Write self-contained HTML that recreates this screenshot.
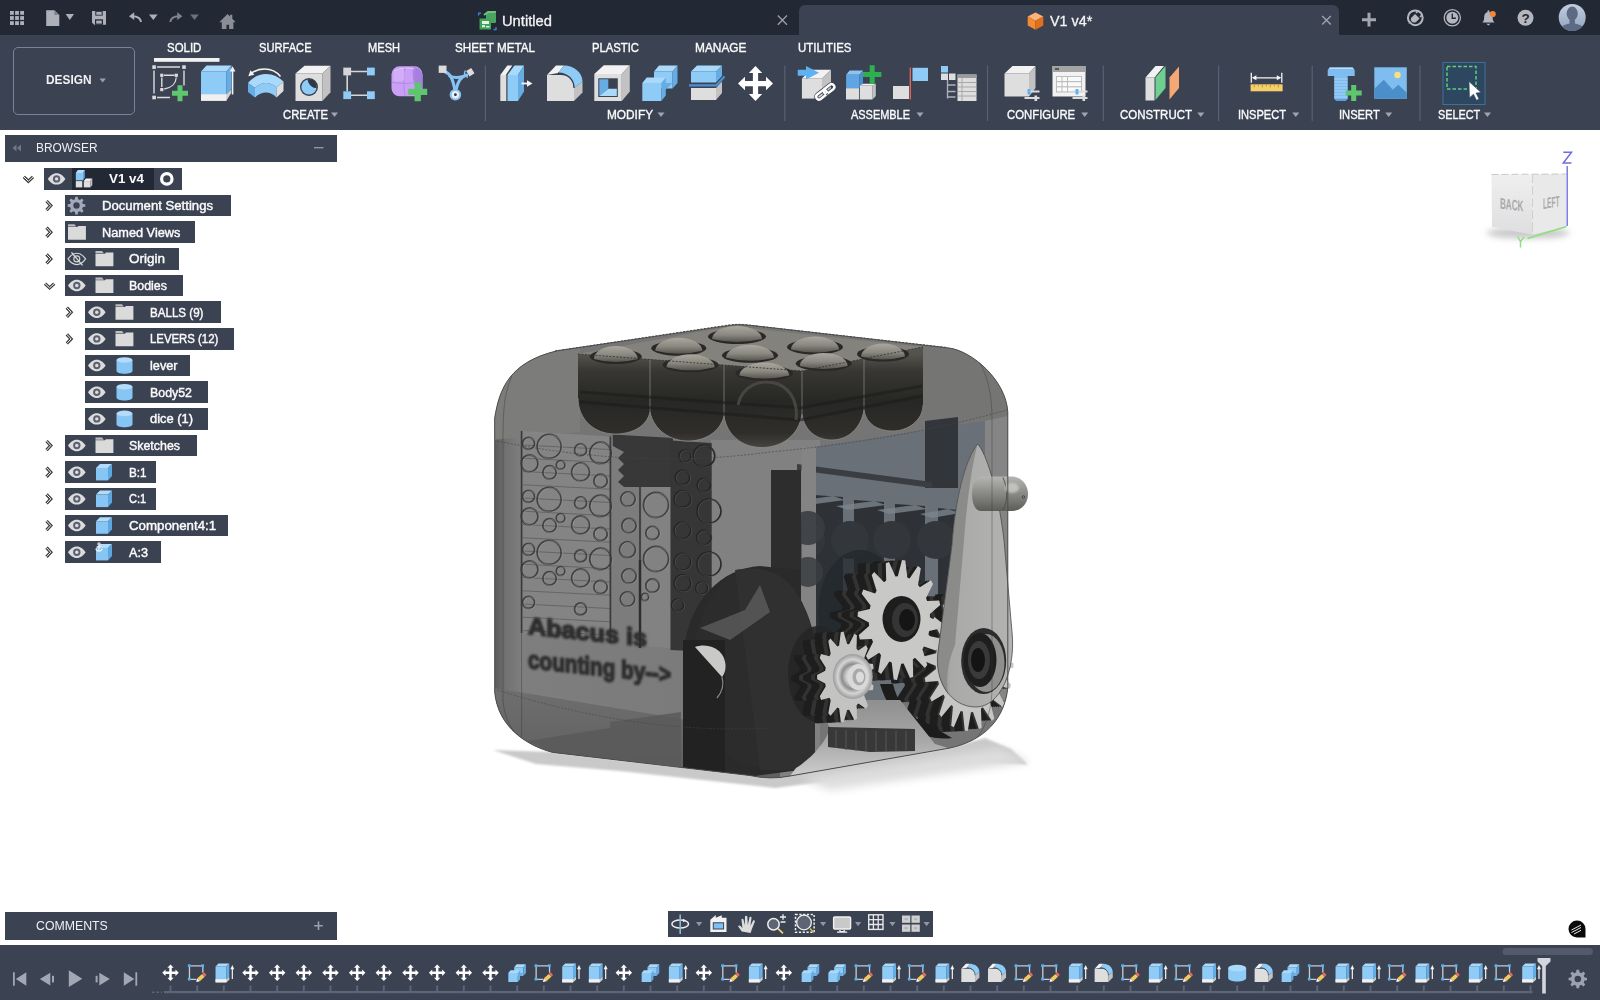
<!DOCTYPE html>
<html><head><meta charset="utf-8"><title>Fusion</title><style>
html,body{margin:0;padding:0;background:#fff;}
body{width:1600px;height:1000px;overflow:hidden;position:relative;font-family:"Liberation Sans",sans-serif;}
.t{position:absolute;white-space:nowrap;display:inline-block;transform-origin:0 50%;}
svg{overflow:visible}
</style></head><body>
<!-- model -->
<svg style="position:absolute;left:440px;top:290px" width="640" height="530" viewBox="440 290 640 530">
<defs>
<filter id="b1" x="-20%" y="-20%" width="140%" height="140%"><feGaussianBlur stdDeviation="1"/></filter>
<filter id="b2" x="-20%" y="-20%" width="140%" height="140%"><feGaussianBlur stdDeviation="2.200"/></filter>
<filter id="b4" x="-20%" y="-40%" width="140%" height="180%"><feGaussianBlur stdDeviation="4"/></filter>
<clipPath id="bodyclip"><path d="M494.7 418C499.3 388.9 509.3 362.3 557 350.8L722 326.5Q738 323 752 325.500L949 348C972 351 1006 380 1007.8 412L1007.8 688C1003.6 726.8 975.1 742.8 949 748.2L790 776Q770 780 750 775.500L552.8 752.4C528 746 498 728 494.7 692Z"/></clipPath>
<linearGradient id="gleft" x1="495" y1="0" x2="720" y2="0" gradientUnits="userSpaceOnUse"><stop offset="0" stop-color="#5c5c5c"/><stop offset=".05" stop-color="#727272"/><stop offset=".12" stop-color="#7e7e7e"/><stop offset="1" stop-color="#7a7a7a"/></linearGradient>
<linearGradient id="gtopdark" x1="0" y1="325" x2="0" y2="445" gradientUnits="userSpaceOnUse"><stop offset="0" stop-color="#3b3a36"/><stop offset=".3" stop-color="#2c2c2a"/><stop offset="1" stop-color="#262625"/></linearGradient>
<linearGradient id="gdome" x1="0" y1="0" x2="0" y2="1"><stop offset="0" stop-color="#a9a79e"/><stop offset=".55" stop-color="#8a8880"/><stop offset="1" stop-color="#55544e"/></linearGradient>
<linearGradient id="garm" x1="0" y1="0" x2="1" y2="0"><stop offset="0" stop-color="#8f8f8d"/><stop offset=".18" stop-color="#a9a9a7"/><stop offset="1" stop-color="#b3b3b1"/></linearGradient>
<linearGradient id="gknob" x1="0" y1="0" x2="0" y2="1"><stop offset="0" stop-color="#b5b5b1"/><stop offset=".45" stop-color="#8d8d89"/><stop offset="1" stop-color="#5c5c59"/></linearGradient>
<radialGradient id="gbear" cx=".5" cy=".5" r=".5"><stop offset="0" stop-color="#efefef"/><stop offset=".35" stop-color="#c9c9c9"/><stop offset=".55" stop-color="#8d8d8d"/><stop offset=".75" stop-color="#d5d5d5"/><stop offset="1" stop-color="#9a9a9a"/></radialGradient>
<linearGradient id="gbot" x1="0" y1="690" x2="0" y2="780" gradientUnits="userSpaceOnUse"><stop offset="0" stop-color="#6e6e6e"/><stop offset="1" stop-color="#5e5e5e"/></linearGradient>
</defs>
<path d="M493 750L536 764L620 771L775 788L900 772L928 765L985 762L1028 764.500L1011 749L985 738L949 748L770 777L552 752Z" fill="#c9c9c9" filter="url(#b1)"/>
<path d="M800 778L1000 748L1030 762L830 790Z" fill="#dddddd" filter="url(#b4)"/>
<g clip-path="url(#bodyclip)">
<rect x="480" y="310" width="540" height="480" fill="#757575"/>
<path d="M495 430L720 445L720 775L495 745Z" fill="url(#gleft)"/>
<path d="M490 440L495 340L580 340L580 432Z" fill="#7c7c7a"/>
<path d="M920 340H1010V425L920 415Z" fill="#757573"/>
<rect x="711" y="440" width="109" height="340" fill="#818181"/>
<path d="M815 447L985 421V700L815 700Z" fill="#697077"/>
<path d="M985 421L1008 416V700H985Z" fill="#858585"/>
<path d="M494 688L700 722L780 712L780 790L494 760Z" fill="url(#gbot)"/>
<path d="M527 741L610 728L610 722L681 712V766L552 752Z" fill="#595959" opacity=".8"/>
<path d="M521.600 431L610.400 436.500V643L521.600 633Z" fill="#848484"/>
<path d="M610.400 436.500L640 438.500V646L610.400 643Z" fill="#7c7c7c"/>
<path d="M641.700 439L670.500 441V648L641.700 646Z" fill="#828282"/>
<path d="M523 445.0L610 449.5M523 458.2L610 462.8M523 471.5L610 476.0M523 484.8L610 489.2M523 498.0L610 502.5M523 511.2L610 515.8M523 524.5L610 529.0M523 537.8L610 542.2M523 551.0L610 555.5M523 564.2L610 568.8M523 577.5L610 582.0M523 590.8L610 595.2M523 604.0L610 608.5M523 617.2L610 621.8M523 630.5L610 635.0" stroke="#565656" stroke-width=".9" fill="none" opacity=".75"/>
<g fill="none" stroke="#3b3b3b" stroke-width="1.800" opacity=".9"><circle cx="549.2" cy="446.4" r="12.0"/><circle cx="528.6" cy="443.4" r="6.0"/><circle cx="580.6" cy="449.9" r="6.0"/><circle cx="600.6" cy="452.9" r="10.8"/><circle cx="529.6" cy="463.4" r="8.4"/><circle cx="560.6" cy="464.9" r="4.3"/><circle cx="549.6" cy="472.4" r="6.7"/><circle cx="580.6" cy="471.9" r="9.0"/><circle cx="600.6" cy="480.9" r="6.7"/><circle cx="549.2" cy="499.4" r="12.0"/><circle cx="528.6" cy="496.4" r="6.0"/><circle cx="580.6" cy="502.9" r="6.0"/><circle cx="600.6" cy="505.9" r="10.8"/><circle cx="529.6" cy="516.4" r="8.4"/><circle cx="560.6" cy="518.0" r="4.3"/><circle cx="549.6" cy="525.4" r="6.7"/><circle cx="580.6" cy="525.0" r="9.0"/><circle cx="600.6" cy="534.0" r="6.7"/><circle cx="549.2" cy="552.4" r="12.0"/><circle cx="528.6" cy="549.4" r="6.0"/><circle cx="580.6" cy="556.0" r="6.0"/><circle cx="600.6" cy="559.0" r="10.8"/><circle cx="529.6" cy="569.4" r="8.4"/><circle cx="560.6" cy="571.0" r="4.3"/><circle cx="549.6" cy="578.4" r="6.7"/><circle cx="580.6" cy="578.0" r="9.0"/><circle cx="600.6" cy="587.0" r="6.7"/><circle cx="528.6" cy="602.4" r="6.0"/><circle cx="580.6" cy="609.0" r="6.0"/><circle cx="628.0" cy="499.0" r="7.2"/><circle cx="629.0" cy="525.6" r="7.2"/><circle cx="627.5" cy="549.7" r="8.0"/><circle cx="629.0" cy="576.0" r="7.2"/><circle cx="627.5" cy="599.0" r="7.2"/><circle cx="656.0" cy="451.0" r="10.8"/><circle cx="656.0" cy="505.0" r="12.5"/><circle cx="652.5" cy="533.0" r="6.7"/><circle cx="656.0" cy="559.0" r="12.5"/><circle cx="652.5" cy="585.7" r="6.7"/><circle cx="645.0" cy="597.0" r="3.6"/></g>
<g fill="none" stroke="#a5a5a5" stroke-width=".8" opacity=".5" transform="translate(1.2,.6)"><circle cx="549.2" cy="446.4" r="12.0"/><circle cx="528.6" cy="443.4" r="6.0"/><circle cx="580.6" cy="449.9" r="6.0"/><circle cx="600.6" cy="452.9" r="10.8"/><circle cx="529.6" cy="463.4" r="8.4"/><circle cx="560.6" cy="464.9" r="4.3"/><circle cx="549.6" cy="472.4" r="6.7"/><circle cx="580.6" cy="471.9" r="9.0"/><circle cx="600.6" cy="480.9" r="6.7"/><circle cx="549.2" cy="499.4" r="12.0"/><circle cx="528.6" cy="496.4" r="6.0"/><circle cx="580.6" cy="502.9" r="6.0"/><circle cx="600.6" cy="505.9" r="10.8"/><circle cx="529.6" cy="516.4" r="8.4"/><circle cx="560.6" cy="518.0" r="4.3"/><circle cx="549.6" cy="525.4" r="6.7"/><circle cx="580.6" cy="525.0" r="9.0"/><circle cx="600.6" cy="534.0" r="6.7"/><circle cx="549.2" cy="552.4" r="12.0"/><circle cx="528.6" cy="549.4" r="6.0"/><circle cx="580.6" cy="556.0" r="6.0"/><circle cx="600.6" cy="559.0" r="10.8"/><circle cx="529.6" cy="569.4" r="8.4"/><circle cx="560.6" cy="571.0" r="4.3"/><circle cx="549.6" cy="578.4" r="6.7"/><circle cx="580.6" cy="578.0" r="9.0"/><circle cx="600.6" cy="587.0" r="6.7"/><circle cx="528.6" cy="602.4" r="6.0"/><circle cx="580.6" cy="609.0" r="6.0"/><circle cx="628.0" cy="499.0" r="7.2"/><circle cx="629.0" cy="525.6" r="7.2"/><circle cx="627.5" cy="549.7" r="8.0"/><circle cx="629.0" cy="576.0" r="7.2"/><circle cx="627.5" cy="599.0" r="7.2"/><circle cx="656.0" cy="451.0" r="10.8"/><circle cx="656.0" cy="505.0" r="12.5"/><circle cx="652.5" cy="533.0" r="6.7"/><circle cx="656.0" cy="559.0" r="12.5"/><circle cx="652.5" cy="585.7" r="6.7"/><circle cx="645.0" cy="597.0" r="3.6"/></g>
<path d="M521.600 431V633M610.400 436.500V643M640 438.500V646" stroke="#3a3a3a" stroke-width="1.700" fill="none"/>
<path d="M612.800 434.500L673 438V487L624 487L618 482L624 476L618 470L624 464L618 458L624 452L612.800 446Z" fill="#383838"/>
<path d="M670.500 440.500L711.700 443V652L670.500 650Z" fill="#363636"/>
<g fill="none" stroke="#242424" stroke-width="1.700" opacity=".95"><circle cx="685.0" cy="456.0" r="6.0"/><circle cx="704.0" cy="456.0" r="10.8"/><circle cx="682.5" cy="477.6" r="7.2"/><circle cx="704.0" cy="485.0" r="6.7"/><circle cx="709.0" cy="511.0" r="12.0"/><circle cx="682.5" cy="499.0" r="8.4"/><circle cx="682.5" cy="530.5" r="8.4"/><circle cx="704.0" cy="537.6" r="7.2"/><circle cx="709.0" cy="564.0" r="12.0"/><circle cx="682.5" cy="561.7" r="8.4"/><circle cx="682.5" cy="583.0" r="8.4"/><circle cx="701.7" cy="588.0" r="6.0"/><circle cx="677.6" cy="605.0" r="6.0"/></g>
<g fill="none" stroke="#6a6a6a" stroke-width=".7" opacity=".6" transform="translate(1,.5)"><circle cx="685.0" cy="456.0" r="6.0"/><circle cx="704.0" cy="456.0" r="10.8"/><circle cx="682.5" cy="477.6" r="7.2"/><circle cx="704.0" cy="485.0" r="6.7"/><circle cx="709.0" cy="511.0" r="12.0"/><circle cx="682.5" cy="499.0" r="8.4"/><circle cx="682.5" cy="530.5" r="8.4"/><circle cx="704.0" cy="537.6" r="7.2"/><circle cx="709.0" cy="564.0" r="12.0"/><circle cx="682.5" cy="561.7" r="8.4"/><circle cx="682.5" cy="583.0" r="8.4"/><circle cx="701.7" cy="588.0" r="6.0"/><circle cx="677.6" cy="605.0" r="6.0"/></g>
<path d="M640 560V648" stroke="#2e2e2e" stroke-width="2.400"/>
<g filter="url(#b1)" fill="#2f2f2f" stroke="#2f2f2f" stroke-width="1.600" font-family="Liberation Sans, sans-serif" font-weight="bold"><text transform="translate(528,634) skewY(6)" font-size="24" textLength="119" lengthAdjust="spacingAndGlyphs">Abacus is</text><text transform="translate(528,668) skewY(6)" font-size="25" textLength="143" lengthAdjust="spacingAndGlyphs">counting by--&gt;</text></g>
<path d="M925 421L958 417V488L925 488Z" fill="#32363b"/>
<path d="M797 464L932 482V488L797 470Z" fill="#3a3e43"/>
<path d="M814 495L843 497V640H814Z" fill="#2e3237"/>
<path d="M796 501L833 496L845 500L808 505Z" fill="#7c848c" opacity=".8"/>
<path d="M854 500L884 502V640H854Z" fill="#2e3237"/>
<path d="M836 506L874 501L886 505L848 510Z" fill="#7c848c" opacity=".8"/>
<path d="M895 504L925 506V640H895Z" fill="#2e3237"/>
<path d="M877 510L915 505L927 509L889 514Z" fill="#7c848c" opacity=".8"/>
<path d="M938 508L958 510V640H938Z" fill="#2e3237"/>
<path d="M920 514L948 509L960 513L932 518Z" fill="#7c848c" opacity=".8"/>
<circle cx="806" cy="540" r="19" fill="#33373c"/>
<circle cx="850" cy="540" r="19" fill="#33373c"/>
<circle cx="892" cy="540" r="19" fill="#33373c"/>
<circle cx="936" cy="540" r="19" fill="#33373c"/>
<path d="M801.500 447L816 447V640H801.500Z" fill="#848484"/>
<circle cx="808" cy="528" r="17" fill="#3a3d41" clip-path="url(#bodyclip)" opacity=".9"/><circle cx="808" cy="572" r="15" fill="#3a3d41" opacity=".85"/>
<path d="M771 470L801 470V720H771Z" fill="#2d2d2d"/>
<path d="M684 648C690 600 722 568 760 566L800 570V770L740 778C700 770 684 720 684 648Z" fill="#2a2a2a"/>
<ellipse cx="755" cy="667" rx="62" ry="99" fill="#2c2c2c"/>
<path d="M735 570C790 560 815 600 815 680V770H760Z" fill="#303030"/>
<path d="M700 628L745 610L760 585L770 612L730 640Z" fill="#5c5c5c" opacity=".8"/>
<path d="M683 640H725V775L683 768Z" fill="#222"/>
<path d="M695 647C705 643 718 647 723 656C727 664 726 672 722 677Z" fill="#c9c9c7"/>
<path d="M722 677C724 684 722 692 717 698" stroke="#8a8a88" stroke-width="1.200" fill="none"/>
<ellipse cx="702" cy="670" rx="14" ry="26" fill="#1e1e1e" opacity=".0"/>
</g>
<path d="M578 354L731 326L923 347L802 371Z" fill="#84827c"/>
<linearGradient id="glob" x1="0" y1="354" x2="0" y2="447" gradientUnits="userSpaceOnUse"><stop offset="0" stop-color="#54534d"/><stop offset=".18" stop-color="#383733"/><stop offset=".5" stop-color="#272725"/><stop offset=".85" stop-color="#2f2e2b"/><stop offset="1" stop-color="#45443f"/></linearGradient>
<path d="M578 354L802 371L923 347V405C923 420 908 431 893 431C878 431 866 424 864 410C861 428 848 440 832 440C816 440 804 430 802 414C799 436 781 447.500 762 447.500C743 447.500 727 436 724 416C720 432 705 441 688 441C670 441 654 430 650 412C647 426 633 434 615 434C595 434 578 420 578 398Z" fill="url(#glob)"/>
<path d="M650 360V412M724 365V416M802 371V414M864 359V410" stroke="#8c8a84" stroke-width="1" opacity=".7"/>
<path d="M578 398C578 420 595 434 615 434C633 434 647 426 650 412C654 430 670 441 688 441C705 441 720 432 724 416C727 436 743 447.500 762 447.500C781 447.500 799 436 802 414C804 430 816 440 832 440C848 440 861 428 864 410C866 424 878 431 893 431C908 431 923 420 923 405" stroke="#8f8d87" stroke-width="1" fill="none" opacity=".75"/>
<path d="M580 392L800 408L922 386M580 402L800 420L922 396" stroke="#1b1b1a" stroke-width="3" fill="none" opacity=".55"/>
<path d="M738 405C742 386 760 378 778 384C792 390 798 404 796 420" stroke="#4d4c47" stroke-width="3" fill="none" opacity=".8"/>
<ellipse cx="737.0" cy="336.5" rx="29.0" ry="7.500" fill="#2a2927"/>
<ellipse cx="678.8" cy="348.2" rx="27.5" ry="7.500" fill="#2a2927"/>
<ellipse cx="815.0" cy="347.0" rx="28.0" ry="7.500" fill="#2a2927"/>
<ellipse cx="615.8" cy="356.5" rx="26.0" ry="7.500" fill="#2a2927"/>
<ellipse cx="750.0" cy="355.3" rx="28.0" ry="7.500" fill="#2a2927"/>
<ellipse cx="883.0" cy="354.1" rx="26.0" ry="7.500" fill="#2a2927"/>
<ellipse cx="690.6" cy="364.8" rx="28.0" ry="7.500" fill="#2a2927"/>
<ellipse cx="823.7" cy="363.5" rx="28.0" ry="7.500" fill="#2a2927"/>
<ellipse cx="764.3" cy="373.1" rx="29.0" ry="7.500" fill="#2a2927"/>
<path d="M712.0 339.0A25.0 13 0 0 1 762.0 339.0Q737.0 345.0 712.0 339.0Z" fill="url(#gdome)"/>
<path d="M655.3 350.7A23.5 13 0 0 1 702.3 350.7Q678.8 356.7 655.3 350.7Z" fill="url(#gdome)"/>
<path d="M791.0 349.5A24.0 13 0 0 1 839.0 349.5Q815.0 355.5 791.0 349.5Z" fill="url(#gdome)"/>
<path d="M593.8 359.0A22.0 13 0 0 1 637.8 359.0Q615.8 365.0 593.8 359.0Z" fill="url(#gdome)"/>
<path d="M726.0 357.8A24.0 13 0 0 1 774.0 357.8Q750.0 363.8 726.0 357.8Z" fill="url(#gdome)"/>
<path d="M861.0 356.6A22.0 13 0 0 1 905.0 356.6Q883.0 362.6 861.0 356.6Z" fill="url(#gdome)"/>
<path d="M666.6 367.3A24.0 13 0 0 1 714.6 367.3Q690.6 373.3 666.6 367.3Z" fill="url(#gdome)"/>
<path d="M799.7 366.0A24.0 13 0 0 1 847.7 366.0Q823.7 372.0 799.7 366.0Z" fill="url(#gdome)"/>
<path d="M739.3 375.6A25.0 13 0 0 1 789.3 375.6Q764.3 381.6 739.3 375.6Z" fill="url(#gdome)"/>
<path d="M555 351L722 326Q738 323 752 325.500L947 347.500" stroke="#3a3a3a" stroke-width="1" fill="none" stroke-dasharray="2 1.500"/>
<path d="M578 354L802 371L923 347" stroke="#2e2e2c" stroke-width="1" fill="none" stroke-dasharray="2 1.500" opacity=".8"/>
<ellipse cx="860" cy="612" rx="42" ry="62" fill="#23282c" opacity=".75"/>
<ellipse cx="818" cy="674" rx="30" ry="48" fill="#262626" opacity=".9"/>
<defs><path id="gr3" d="M1013.5 663.3 L1013.4 667.6 L1000.8 670.8 L1000.4 673.9 L1011.0 684.5 L1010.0 688.6 L997.5 685.7 L996.5 688.4 L1004.4 703.6 L1002.6 707.0 L991.3 698.3 L989.8 700.4 L994.3 718.6 L991.9 720.9 L982.9 707.3 L981.0 708.6 L981.6 728.0 L978.9 729.1 L973.0 711.9 L971.0 712.2 L967.7 731.0 L964.8 730.8 L962.8 711.6 L960.7 710.9 L953.8 727.2 L951.2 725.7 L953.0 706.4 L951.3 704.9 L941.4 717.1 L939.2 714.3 L944.8 696.9 L943.5 694.6 L931.6 701.5 L930.1 697.9 L939.0 684.0 L938.1 681.1 L925.5 682.1 L924.7 677.9 L936.0 669.0 L935.7 665.8 L923.5 660.7 L923.6 656.4 L936.2 653.2 L936.6 650.1 L926.0 639.5 L927.0 635.4 L939.5 638.3 L940.5 635.6 L932.6 620.4 L934.4 617.0 L945.7 625.7 L947.2 623.6 L942.7 605.4 L945.1 603.1 L954.1 616.7 L956.0 615.4 L955.4 596.0 L958.1 594.9 L964.0 612.1 L966.0 611.8 L969.3 593.0 L972.2 593.2 L974.2 612.4 L976.3 613.1 L983.2 596.8 L985.8 598.3 L984.0 617.6 L985.7 619.1 L995.6 606.9 L997.8 609.7 L992.2 627.1 L993.5 629.4 L1005.4 622.5 L1006.9 626.1 L998.0 640.0 L998.9 642.9 L1011.5 641.9 L1012.3 646.1 L1001.0 655.0 L1001.3 658.2z"/></defs><use href="#gr3" x="-34.0" y="1.4" fill="#1e1e1e"/><use href="#gr3" x="-32.0" y="1.3" fill="#1e1e1e"/><use href="#gr3" x="-30.0" y="1.2" fill="#1e1e1e"/><use href="#gr3" x="-28.0" y="1.1" fill="#1e1e1e"/><use href="#gr3" x="-26.0" y="1.0" fill="#333332"/><use href="#gr3" x="-24.0" y="1.0" fill="#333332"/><use href="#gr3" x="-22.0" y="0.9" fill="#1e1e1e"/><use href="#gr3" x="-20.0" y="0.8" fill="#1e1e1e"/><use href="#gr3" x="-18.0" y="0.7" fill="#1e1e1e"/><use href="#gr3" x="-16.0" y="0.6" fill="#1e1e1e"/><use href="#gr3" x="-14.0" y="0.6" fill="#333332"/><use href="#gr3" x="-12.0" y="0.5" fill="#333332"/><use href="#gr3" x="-10.0" y="0.4" fill="#1e1e1e"/><use href="#gr3" x="-8.0" y="0.3" fill="#1e1e1e"/><use href="#gr3" x="-6.0" y="0.2" fill="#1e1e1e"/><use href="#gr3" x="-4.0" y="0.2" fill="#1e1e1e"/><use href="#gr3" x="-2.0" y="0.1" fill="#333332"/><use href="#gr3" fill="#c6c6c4"/>
<path d="M880 684C892 725 925 742 952 738L925 722C905 715 897 700 893 684Z" fill="#1c1c1c"/>
<linearGradient id="gfloor" x1="0" y1="700" x2="0" y2="778" gradientUnits="userSpaceOnUse"><stop offset="0" stop-color="#8f8f8f"/><stop offset=".5" stop-color="#a6a6a6"/><stop offset="1" stop-color="#cfcfcf"/></linearGradient>
<path d="M815 700H900L935 744L949 748.200L790 776L796 768C812 758 826 742 830 728Z" fill="url(#gfloor)" clip-path="url(#bodyclip)"/>
<path d="M828 727L915 729V751L870 752L828 747Z" fill="#383838"/>
<path d="M836 730V748M846 730V750M856 731V751M866 731V751M876 731V751M886 731V751M896 731V751M906 731V750" stroke="#555" stroke-width="1.500" opacity=".7"/>
<defs><path id="gr1" d="M941.4 623.6 L941.1 628.3 L929.2 631.1 L928.4 634.4 L937.3 646.3 L935.7 650.4 L923.9 646.5 L922.4 649.2 L927.3 664.9 L924.8 667.9 L915.0 657.8 L912.8 659.4 L913.2 676.7 L910.0 678.1 L903.6 663.4 L901.2 663.7 L897.0 679.9 L893.7 679.4 L891.7 662.4 L889.4 661.4 L881.1 673.9 L878.2 671.7 L881.0 654.9 L879.1 652.7 L868.1 659.8 L866.0 656.1 L873.0 642.1 L871.9 639.0 L859.8 639.6 L858.8 635.0 L869.1 625.9 L868.9 622.5 L857.6 616.4 L857.9 611.7 L869.8 608.9 L870.6 605.6 L861.7 593.7 L863.3 589.6 L875.1 593.5 L876.6 590.8 L871.7 575.1 L874.2 572.1 L884.0 582.2 L886.2 580.6 L885.8 563.3 L889.0 561.9 L895.4 576.6 L897.8 576.3 L902.0 560.1 L905.3 560.6 L907.3 577.6 L909.6 578.6 L917.9 566.1 L920.8 568.3 L918.0 585.1 L919.9 587.3 L930.9 580.2 L933.0 583.9 L926.0 597.9 L927.1 601.0 L939.2 600.4 L940.2 605.0 L929.9 614.1 L930.1 617.5z"/></defs><use href="#gr1" x="-28.0" y="1.1" fill="#1e1e1e"/><use href="#gr1" x="-26.0" y="1.0" fill="#1e1e1e"/><use href="#gr1" x="-24.0" y="1.0" fill="#1e1e1e"/><use href="#gr1" x="-22.0" y="0.9" fill="#1e1e1e"/><use href="#gr1" x="-20.0" y="0.8" fill="#333332"/><use href="#gr1" x="-18.0" y="0.7" fill="#333332"/><use href="#gr1" x="-16.0" y="0.6" fill="#1e1e1e"/><use href="#gr1" x="-14.0" y="0.6" fill="#1e1e1e"/><use href="#gr1" x="-12.0" y="0.5" fill="#1e1e1e"/><use href="#gr1" x="-10.0" y="0.4" fill="#1e1e1e"/><use href="#gr1" x="-8.0" y="0.3" fill="#333332"/><use href="#gr1" x="-6.0" y="0.2" fill="#333332"/><use href="#gr1" x="-4.0" y="0.2" fill="#1e1e1e"/><use href="#gr1" x="-2.0" y="0.1" fill="#1e1e1e"/><use href="#gr1" fill="#c8c8c6"/>
<ellipse cx="901.500" cy="619" rx="19" ry="23" fill="#1d1d1d"/><ellipse cx="905" cy="620" rx="13" ry="17" fill="#353535"/><ellipse cx="907" cy="620" rx="8" ry="11" fill="#151515"/>
<defs><path id="gr2" d="M873.6 685.7 L872.9 689.9 L864.5 690.9 L863.6 693.8 L867.9 705.4 L866.0 708.7 L858.3 703.4 L856.6 705.2 L857.0 718.7 L854.5 720.2 L849.1 709.7 L847.1 710.1 L843.6 722.4 L840.8 721.9 L839.2 708.6 L837.3 707.5 L830.6 715.7 L828.3 713.2 L830.7 700.2 L829.4 697.8 L821.1 700.1 L819.8 696.2 L825.7 686.6 L825.2 683.4 L817.1 679.3 L817.1 674.9 L825.2 670.7 L825.7 667.6 L819.7 657.9 L821.0 654.0 L829.4 656.2 L830.7 653.8 L828.3 640.9 L830.5 638.4 L837.3 646.6 L839.1 645.4 L840.8 632.2 L843.5 631.6 L847.1 643.9 L849.1 644.2 L854.4 633.7 L856.9 635.3 L856.5 648.8 L858.2 650.6 L866.0 645.2 L867.8 648.4 L863.5 660.1 L864.5 663.0 L872.9 663.9 L873.6 668.2 L866.4 675.3 L866.4 678.5z"/></defs><use href="#gr2" x="-26.0" y="1.0" fill="#1e1e1e"/><use href="#gr2" x="-24.0" y="1.0" fill="#1e1e1e"/><use href="#gr2" x="-22.0" y="0.9" fill="#1e1e1e"/><use href="#gr2" x="-20.0" y="0.8" fill="#1e1e1e"/><use href="#gr2" x="-18.0" y="0.7" fill="#333332"/><use href="#gr2" x="-16.0" y="0.6" fill="#333332"/><use href="#gr2" x="-14.0" y="0.6" fill="#1e1e1e"/><use href="#gr2" x="-12.0" y="0.5" fill="#1e1e1e"/><use href="#gr2" x="-10.0" y="0.4" fill="#1e1e1e"/><use href="#gr2" x="-8.0" y="0.3" fill="#1e1e1e"/><use href="#gr2" x="-6.0" y="0.2" fill="#333332"/><use href="#gr2" x="-4.0" y="0.2" fill="#333332"/><use href="#gr2" x="-2.0" y="0.1" fill="#1e1e1e"/><use href="#gr2" fill="#c3c3c1"/>
<ellipse cx="852.800" cy="676.500" rx="20" ry="22.500" fill="url(#gbear)"/><ellipse cx="858" cy="677" rx="10.500" ry="13" fill="#d9d9d9"/><ellipse cx="859" cy="677" rx="6.500" ry="8.500" fill="#a9a9a9"/><ellipse cx="860" cy="677" rx="4" ry="5.500" fill="#dcdcdc"/>
<path d="M977.500 444C986 452 998 490 1004 540L1012 632C1016 670 1000 707 976 707C950 707 934 680 938 652L952 545C955 500 965 460 977.500 444Z" fill="url(#garm)"/>
<path d="M977.500 444C965 460 955 500 952 545L938 652C936 668 940 684 948 694C946 680 947 664 955 645L964 540C967 500 972 465 977.500 444Z" fill="#8b8b89"/>
<path d="M977.500 444C986 452 998 490 1004 540L1012 632C1016 670 1000 707 976 707C950 707 934 680 938 652L952 545C955 500 965 460 977.500 444Z" fill="none" stroke="#4a4a4a" stroke-width=".8"/>
<ellipse cx="983.700" cy="661" rx="22.500" ry="33" fill="#2b2b2b"/><ellipse cx="986" cy="663" rx="18.500" ry="29" fill="#8f8f8d"/><ellipse cx="980" cy="660" rx="16.500" ry="27" fill="#1e1e1e"/><ellipse cx="979" cy="660" rx="11" ry="19" fill="#3a3a3a"/><ellipse cx="978" cy="660" rx="7" ry="12" fill="#141414"/>
<path d="M981 476.500H1011C1022 476.500 1028 485 1028 494C1028 503 1022 511 1011 511H981C975 511 972 503 972 494C972 485 975 476.500 981 476.500Z" fill="url(#gknob)"/>
<path d="M1003 477.500C1008 490 1008 500 1003 510" stroke="#4c4c4a" stroke-width=".9" fill="none"/>
<ellipse cx="1012" cy="488" rx="7" ry="5" fill="#d2d2ce" opacity=".7" filter="url(#b1)"/>
<circle cx="1023.500" cy="497" r="1.300" fill="none" stroke="#333" stroke-width=".7"/>
<path d="M494.7 418C499.3 388.9 509.3 362.3 557 350.8L722 326.5Q738 323 752 325.500L949 348C972 351 1006 380 1007.8 412L1007.8 688C1003.6 726.8 975.1 742.8 949 748.2L790 776Q770 780 750 775.500L552.8 752.4C528 746 498 728 494.7 692Z" fill="none" stroke="#4d4d4d" stroke-width="1"/>
<path d="M497 441Q640 470 770 452Q900 440 1007 410" stroke="#444" stroke-width=".8" fill="none" stroke-dasharray="2 1.500" opacity=".8"/>
<path d="M497 690Q640 735 770 728" stroke="#444" stroke-width=".8" fill="none" stroke-dasharray="2 1.500" opacity=".7"/>
<path d="M521.600 633V745M512 376C505 392 503 405 503 440V700C504 718 512 734 526 742" stroke="#3a3a3a" stroke-width=".8" fill="none" opacity=".55" clip-path="url(#bodyclip)"/>
<path d="M975 356C988 372 992 395 992 420V690C991 715 984 730 975 740" stroke="#3a3a3a" stroke-width=".8" fill="none" opacity=".5" clip-path="url(#bodyclip)"/>
</svg>
<!-- titlebar -->
<div style="position:absolute;left:0;top:0;width:1600px;height:35px;background:#222834"></div>
<div style="position:absolute;left:799px;top:5px;width:540px;height:31px;background:#3b4252;border-radius:6px 6px 0 0"></div>
<span class="t" style="left:502.30px;top:12.95px;font-size:14px;line-height:17px;color:#f2f3f5; transform:scaleX(1.0505);-webkit-text-stroke:.3px #f2f3f5;">Untitled</span>
<span class="t" style="left:1050.30px;top:13.05px;font-size:14px;line-height:17px;color:#f2f3f5; transform:scaleX(1.0255);-webkit-text-stroke:.3px #f2f3f5;">V1 v4*</span>
<svg style="position:absolute;left:0;top:0" width="1600" height="36" viewBox="0 0 1600 36">
<rect x="10.0" y="11.0" width="3.8" height="3.8" fill="#adb0b9"/>
<rect x="15.1" y="11.0" width="3.8" height="3.8" fill="#adb0b9"/>
<rect x="20.2" y="11.0" width="3.8" height="3.8" fill="#adb0b9"/>
<rect x="10.0" y="16.1" width="3.8" height="3.8" fill="#adb0b9"/>
<rect x="15.1" y="16.1" width="3.8" height="3.8" fill="#adb0b9"/>
<rect x="20.2" y="16.1" width="3.8" height="3.8" fill="#adb0b9"/>
<rect x="10.0" y="21.2" width="3.8" height="3.8" fill="#adb0b9"/>
<rect x="15.1" y="21.2" width="3.8" height="3.8" fill="#adb0b9"/>
<rect x="20.2" y="21.2" width="3.8" height="3.8" fill="#adb0b9"/>
<path d="M46.2 10.2h8.2l4.9 4.9v10.8h-13.1z" fill="#adb0b9"/><path d="M54.4 10.2v4.9h4.9z" fill="#7d818c"/>
<path d="M65.6 14h8.4l-4.2 6z" fill="#adb0b9"/>
<path d="M92 11h14v13.8h-11.8l-2.2-2.2z" fill="#adb0b9"/><rect x="95.3" y="11" width="7.4" height="4.6" fill="#222834"/><rect x="96.3" y="11.8" width="5.4" height="3" fill="#adb0b9"/><rect x="95" y="19.3" width="8" height="5.5" fill="#222834"/><rect x="96.2" y="20.6" width="5.6" height="3" fill="#adb0b9"/>
<path d="M141 22c-.5-4-3.5-5.8-8.5-5.8" fill="none" stroke="#adb0b9" stroke-width="2"/><path d="M129 16.2l5.2-3.9v7.8z" fill="#adb0b9"/>
<path d="M149 14.4h8.6l-4.3 5.6z" fill="#adb0b9"/>
<path d="M170.3 22c.5-4 3.5-5.8 8.5-5.8" fill="none" stroke="#80848f" stroke-width="2"/><path d="M182.4 16.2l-5.2-3.9v7.8z" fill="#80848f"/>
<path d="M190.2 14.4h8.6l-4.3 5.6z" fill="#6d717c"/>
<path d="M219.3 22.2l8.2-8.2 2.6 2.6v-1.8h2.2v4l3.4 3.4h-2.3v6.8h-4.3v-4.2h-2.6v4.2h-4.7v-6.8z" fill="#8a8d95"/>
<rect x="486" y="13" width="10" height="10" rx="1" fill="#4aa562"/><path d="M484 15l4-3h8" fill="none" stroke="#6cc381" stroke-width="2"/><rect x="479.5" y="18.5" width="11.5" height="11" fill="#3ea457"/><rect x="482" y="21" width="7" height="3" fill="#e8f5ea"/><rect x="482" y="25.2" width="3" height="2" fill="#e8f5ea"/><rect x="486" y="26" width="3.5" height="1.4" fill="#e8f5ea"/>
<path d="M478.6 15.5v-2.4h2.4M496 27v2.6h-2.6" fill="none" stroke="#3f86e0" stroke-width="1.3"/>
<path d="M777.8 15.6l9.2 9.2M787 15.6l-9.2 9.2" stroke="#9a9da6" stroke-width="1.4"/>
<path d="M1035.5 12.4l7.8 4.1-7.8 4.2-7.8-4.2z" fill="#ffb27a"/><path d="M1027.7 16.5l7.8 4.2v9l-7.8-4.3z" fill="#f58a33"/><path d="M1043.3 16.5l-7.8 4.2v9l7.8-4.3z" fill="#e26f1c"/>
<path d="M1322.2 16l8.6 8.6M1330.8 16l-8.6 8.6" stroke="#9ea2ac" stroke-width="1.4"/>
<path d="M1369 12.8v13.8M1362 19.7h14" stroke="#a3a6ae" stroke-width="3"/>
<circle cx="1415.3" cy="17.8" r="7.4" fill="none" stroke="#b4b7bf" stroke-width="2"/><path d="M1411.5 17.5l3.5-3.5 4.6 4.6-3.5 3.5c-1.6 1-3.4 .4-4.3-.6-1-.9-1.4-2.6-.3-4z" fill="#b4b7bf"/><path d="M1416 13l2-2M1420 17l2-2M1411 22l-2.5 2.5" stroke="#b4b7bf" stroke-width="1.6"/><path d="M1408 24l3 2.5" stroke="#222834" stroke-width="2.5"/>
<circle cx="1452.3" cy="17.8" r="8.1" fill="none" stroke="#b4b7bf" stroke-width="1.3"/><circle cx="1452.3" cy="17.8" r="6" fill="#b4b7bf"/><path d="M1452.3 13.6v4.6h3.6" fill="none" stroke="#222834" stroke-width="1.4"/>
<path d="M1482.3 22.6c1.8-1.6 1.8-3.4 1.9-6 .2-3 2-4.6 4.2-4.6s4 1.600 4.200 4.600c.1 2.600 .1 4.400 1.900 6z" fill="#b4b7bf"/><rect x="1487.400" y="10.3" width="2" height="2.200" rx="1" fill="#b4b7bf"/><path d="M1486.200 23.800h4.400l-2.200 1.700z" fill="#b4b7bf"/><circle cx="1492.700" cy="14" r="3.1" fill="#f5853a"/>
<circle cx="1525.5" cy="17.8" r="8" fill="#b4b7bf"/><text x="1525.5" y="22.6" font-family="Liberation Sans, sans-serif" font-weight="bold" font-size="13.5" text-anchor="middle" fill="#222834">?</text>
<defs><clipPath id="avc"><circle cx="1572.2" cy="17.4" r="13.5"/></clipPath><linearGradient id="avg" x1="0" y1="0" x2="0" y2="1"><stop offset="0" stop-color="#c3cfe0"/><stop offset="1" stop-color="#8fa2bd"/></linearGradient></defs>
<circle cx="1572.2" cy="17.4" r="13.5" fill="url(#avg)"/><g clip-path="url(#avc)" fill="#5d6a84"><ellipse cx="1572.2" cy="13.6" rx="5.6" ry="7"/><path d="M1569.500 19h5.400v4.500c4 1 7.600 2 8.600 4.500v6h-22.600v-6c1-2.500 4.600-3.500 8.600-4.500z"/></g>
</svg>
<!-- toolbar -->
<div style="position:absolute;left:0;top:35px;width:1600px;height:95px;background:#3b4252"></div>
<div style="position:absolute;left:13px;top:47.300px;width:120px;height:65.500px;border:1.200px solid #78829a;border-radius:5px"></div>
<span class="t" style="left:45.70px;top:72.73px;font-size:12.6px;line-height:15px;color:#f2f3f5;font-weight:bold; transform:scaleX(0.9426);">DESIGN</span>
<svg style="position:absolute;left:98px;top:76px" width="10" height="8"><path d="M1.500 2.500h6.400l-3.200 4z" fill="#9aa0ae"/></svg>
<span class="t" style="left:167.00px;top:40.84px;font-size:12px;line-height:14px;color:#fafbfc; transform:scaleX(0.9528);-webkit-text-stroke:.35px #fafbfc;">SOLID</span>
<span class="t" style="left:259.00px;top:40.84px;font-size:12px;line-height:14px;color:#fafbfc; transform:scaleX(0.9272);-webkit-text-stroke:.35px #fafbfc;">SURFACE</span>
<span class="t" style="left:368.00px;top:40.84px;font-size:12px;line-height:14px;color:#fafbfc; transform:scaleX(0.9242);-webkit-text-stroke:.35px #fafbfc;">MESH</span>
<span class="t" style="left:454.50px;top:40.84px;font-size:12px;line-height:14px;color:#fafbfc; transform:scaleX(0.9726);-webkit-text-stroke:.35px #fafbfc;">SHEET METAL</span>
<span class="t" style="left:591.50px;top:40.84px;font-size:12px;line-height:14px;color:#fafbfc; transform:scaleX(0.9400);-webkit-text-stroke:.35px #fafbfc;">PLASTIC</span>
<span class="t" style="left:694.50px;top:40.84px;font-size:12px;line-height:14px;color:#fafbfc; transform:scaleX(0.9904);-webkit-text-stroke:.35px #fafbfc;">MANAGE</span>
<span class="t" style="left:798.00px;top:40.84px;font-size:12px;line-height:14px;color:#fafbfc; transform:scaleX(0.9554);-webkit-text-stroke:.35px #fafbfc;">UTILITIES</span>
<span class="t" style="left:282.50px;top:107.64px;font-size:12px;line-height:14px;color:#fafbfc; transform:scaleX(0.9424);-webkit-text-stroke:.35px #fafbfc;">CREATE</span>
<span class="t" style="left:607.00px;top:107.64px;font-size:12px;line-height:14px;color:#fafbfc; transform:scaleX(0.9866);-webkit-text-stroke:.35px #fafbfc;">MODIFY</span>
<span class="t" style="left:851.00px;top:107.64px;font-size:12px;line-height:14px;color:#fafbfc; transform:scaleX(0.9112);-webkit-text-stroke:.35px #fafbfc;">ASSEMBLE</span>
<span class="t" style="left:1007.00px;top:107.64px;font-size:12px;line-height:14px;color:#fafbfc; transform:scaleX(0.9472);-webkit-text-stroke:.35px #fafbfc;">CONFIGURE</span>
<span class="t" style="left:1120.20px;top:107.64px;font-size:12px;line-height:14px;color:#fafbfc; transform:scaleX(0.9552);-webkit-text-stroke:.35px #fafbfc;">CONSTRUCT</span>
<span class="t" style="left:1238.00px;top:107.64px;font-size:12px;line-height:14px;color:#fafbfc; transform:scaleX(0.9231);-webkit-text-stroke:.35px #fafbfc;">INSPECT</span>
<span class="t" style="left:1339.00px;top:107.64px;font-size:12px;line-height:14px;color:#fafbfc; transform:scaleX(0.9303);-webkit-text-stroke:.35px #fafbfc;">INSERT</span>
<span class="t" style="left:1437.80px;top:107.64px;font-size:12px;line-height:14px;color:#fafbfc; transform:scaleX(0.9051);-webkit-text-stroke:.35px #fafbfc;">SELECT</span>
<svg style="position:absolute;left:0;top:35px" width="1600" height="95" viewBox="0 35 1600 95">
<g transform="translate(152.00,65.00)"><path d="M5 2h23M2 5.500v23M32 5.500v15M5 32.500h13" stroke="#dcdcdc" stroke-width="1.4" fill="none"/><rect x="0.3" y="0.3" width="3.6" height="3.600" fill="#dcdcdc"/><rect x="30.2" y="0.3" width="3.6" height="3.600" fill="#dcdcdc"/><rect x="0.3" y="30.7" width="3.6" height="3.600" fill="#dcdcdc"/><path d="M12 10.300h10.500M9.800 12.500v9.500" stroke="#dcdcdc" stroke-width="1.400" fill="none"/><path d="M24.300 12.500c-.5 6-5 10.500-12 11.500" stroke="#dcdcdc" stroke-width="1.300" fill="none"/><rect x="8.2" y="8.7" width="3.200" height="3.200" fill="#dcdcdc"/><rect x="22.7" y="8.7" width="3.200" height="3.200" fill="#dcdcdc"/><rect x="8.2" y="23.0" width="3.200" height="3.200" fill="#dcdcdc"/><path d="M20.0 28.3h16.0M28.0 20.3v16.0" stroke="#5ec66e" stroke-width="5.0"/></g>
<g transform="translate(200.00,65.00)"><path d="M1 29h25.300l5-4.500v3.500l-5 7.800h-25.300z" fill="#cfcfcf"/><path d="M1 29h25.300v6.800h-25.300z" fill="#f0f0f0"/><path d="M1 6.500l5.500-6h25l-5.200 6z" fill="#aadafb"/><path d="M1 6.500h25.300v22.800h-25.300z" fill="#8ecbf6"/><path d="M26.300 6.500l5.200-6v23.500l-5.200 5.300z" fill="#66ade5"/><path d="M32.600 29.500v-24" stroke="#f4f4f4" stroke-width="1.500"/><path d="M32.600 1.200l2.800 5.300h-5.600z" fill="#f4f4f4"/></g>
<g transform="translate(247.50,67.50)"><path d="M0.500 15.500c5-6 11-9 18-9s13 3 17.500 7.500l-7 6c-3-3-7-4.500-10.500-4.500s-8 1.500-11 5z" fill="#aadafb"/><path d="M0.500 15.500l7 5v9.500l-7-5.500z" fill="#66ade5"/><path d="M7.500 20.500c3-3.500 7.500-5 11-5s7.500 1.500 10.500 4.500v10c-3-3.500-7-5-10.500-5s-8 1.500-11 5z" fill="#8ecbf6"/><path d="M29 20l7-6v9.500l-7 6.500z" fill="#dedede"/><path d="M33 9c-4-5-10-7.500-16-7.500s-10.500 2-14 5" stroke="#f4f4f4" stroke-width="1.500" fill="none"/><path d="M0.800 8.800l2.200-6 3.800 4.400z" fill="#f4f4f4"/></g>
<g transform="translate(295.00,65.50)"><path d="M0.500 8l9-7.800h26l-8.200 7.800z" fill="#f2f2f2"/><path d="M0.500 8h26.800v27.500h-26.800z" fill="#dedede"/><path d="M27.300 8l8.200-7.800v26.500l-8.200 8.800z" fill="#c2c2c2"/><circle cx="14" cy="21.500" r="9" fill="#3a4150"/><circle cx="14" cy="21.500" r="7.600" fill="#8ecbf6"/><path d="M12.500 14c5-1.200 9.500 2 9 8.500-2.500.5-8-2-9-8.500z" fill="#2f3644"/></g>
<g transform="translate(343.00,67.30)"><path d="M8 4.200h16M4.200 8v16M8 28h16" stroke="#d6d6d6" stroke-width="1.600" fill="none"/><rect x="0.300" y="0.300" width="7.800" height="7.800" fill="#d6d6d6"/><rect x="24.0" y="0.3" width="7.800" height="7.800" fill="#8ecbf6"/><rect x="0.3" y="24.0" width="7.800" height="7.800" fill="#8ecbf6"/><rect x="24.0" y="24.0" width="7.800" height="7.800" fill="#8ecbf6"/></g>
<g transform="translate(391.00,65.30)"><rect x="0.500" y="1" width="31" height="30" rx="8" fill="#c9a0f6"/><path d="M22 2c6 0 9.500 4 9.500 9v12c-3-1-6-2-8-3-2-6-2-12-1.500-18z" fill="#a67fe0"/><path d="M3 6c4-3.500 16-4 21-2" stroke="#e3cdfb" stroke-width="1" fill="none"/><path d="M14 2.500c-1.500 8-1.500 20 0 28M1 17c8 1.500 17 1.500 24 0M23.500 3c-1 5-1 12 1 17" stroke="#b38ae8" stroke-width="1" fill="none"/><rect x="2.500" y="4" width="11" height="12" rx="3" fill="#d7b4fa" opacity=".7"/><path d="M17.2 26.5h19.0M26.7 17.0v19.0" stroke="#5ec66e" stroke-width="6.3"/></g>
<g transform="translate(438.70,65.50)"><g fill="none" stroke="#86c2f2" stroke-linecap="round"><path d="M6.500 6.500C11.500 8 14 13 16.300 25" stroke-width="3.100"/><path d="M28 9.500C23 10.500 19.500 14 17.100 25" stroke-width="3.100"/><path d="M11 10.500Q17 13.300 24.500 10.800" stroke-width="2.800"/></g><rect x="0" y="0.100" width="7.800" height="7.300" fill="#dcdcdc"/><path d="M27.500 5.500l5-3 3.300 5.300-5 3.200z" fill="#dcdcdc"/><path d="M26.800 5c-2.300 2.500-.8 6.500 2.500 6.800" stroke="#86c2f2" stroke-width="1.400" fill="none"/><circle cx="16.700" cy="29.200" r="5.800" fill="#86c2f2"/><circle cx="16.700" cy="29.200" r="3.700" fill="#f0f0f0"/><circle cx="16.700" cy="29.200" r="1.400" fill="#2b3040"/></g>
<g transform="translate(500.00,65.00)"><path d="M0.300 10l7-9.500h5l-6.500 9.500z" fill="#f2f2f2"/><path d="M0.300 10h6v26h-6z" fill="#dedede"/><path d="M7.500 10l7-9.500h9.500l-6 9.500z" fill="#aadafb"/><path d="M7.500 10h10.500v26h-10.500z" fill="#8ecbf6"/><path d="M18 10l6-9.500v26l-6 9.500z" fill="#66ade5"/><path d="M21.500 18.500h7" stroke="#f4f4f4" stroke-width="1.800"/><path d="M32.500 18.500l-5.500-3.300v6.600z" fill="#f4f4f4"/></g>
<g transform="translate(547.00,65.00)"><path d="M0 10l9-9.500h8l-6 7.500z" fill="#f2f2f2"/><path d="M0 10h14c7 0 13 5 13 13v13h-27z" fill="#dedede"/><path d="M27 23l8.500-6.500v11l-8.500 8.500z" fill="#c2c2c2"/><path d="M11 8l6-7.500c10 0 18.500 7 18.500 16l-8.500 6.500c0-8-6-15-16-15z" fill="#8ecbf6"/><path d="M11 8c10 0 16 7 16 15" stroke="#2f3644" stroke-width="1.200" fill="none"/></g>
<g transform="translate(594.30,65.00)"><path d="M0 9l9.500-8.800h26l-8 8.800z" fill="#f2f2f2"/><path d="M0 9h27.500v27h-27.500z" fill="#dedede"/><path d="M27.500 9l8-8.800v26.300l-8 9.500z" fill="#c2c2c2"/><rect x="4" y="13.300" width="19.500" height="18.700" fill="#3a4150"/><path d="M5 14.300h9v9.500l-9 7.200z" fill="#66ade5"/><path d="M5 31l9-7.200h8.500v7.200z" fill="#aadafb"/></g>
<g transform="translate(642.00,65.00)"><path d="M12 6.500l5-6h18.500l-5 6z" fill="#aadafb"/><path d="M12 6.500h18.500v17h-18.500z" fill="#8ecbf6"/><path d="M30.500 6.500l5-6v17.500l-5 5.500z" fill="#66ade5"/><path d="M0.300 18l4.500-5.500h19l-4.500 5.500z" fill="#aadafb"/><path d="M0.300 18h19v18h-19z" fill="#8ecbf6"/><path d="M19.300 18l4.500-5.500v5.500h6.700l-5.500 5.500h-1.200v7l-4.500 5.500z" fill="#66ade5"/></g>
<g transform="translate(690.00,65.00)"><path d="M1 6.500l6-6h25l-6 6z" fill="#aadafb"/><path d="M1 6.500h25v11h-25z" fill="#8ecbf6"/><path d="M26 6.500l6-6v10.500l-6 6.500z" fill="#66ade5"/><path d="M1 23h25v12h-25z" fill="#dedede"/><path d="M26 23l6-6.500v11.500l-6 7z" fill="#c2c2c2"/><path d="M-1 20.300h27.500l8-8.800" stroke="#4f8fcf" stroke-width="2.200" fill="none"/></g>
<g transform="translate(738.00,66.00)"><path d="M17.50 0l6.65 7.00h-13.30z M17.50 35.00l6.65 -7.00h-13.30z M0 17.50l7.00 -6.65v13.30z M35.00 17.50l-7.00 -6.65v13.30z" fill="#ffffff"/><path d="M17.50 6.50v22.00M6.50 17.50h22.00" stroke="#ffffff" stroke-width="5.25"/></g>
<g transform="translate(797.50,65.50)"><path d="M4.400 12.900l9-8.600h20.100l-9 8.600z" fill="#f2f2f2"/><path d="M4.400 12.900h20.100v20.200h-20.100z" fill="#dedede"/><path d="M24.500 12.900l9-8.600v19.500l-9 9.300z" fill="#c2c2c2"/><path d="M0.200 4.300h8.300v-3.800l13 6.800-13 6.800v-3.800h-8.300z" fill="#5fb2f2"/><g transform="translate(19.3,33.0) rotate(-38)"><rect x="0.0" y="-2.800" width="12" height="5.600" rx="2.800" fill="none" stroke="#3b4252" stroke-width="4.0"/><rect x="9.5" y="-2.800" width="12" height="5.600" rx="2.800" fill="none" stroke="#3b4252" stroke-width="4.0"/><rect x="0.0" y="-2.800" width="12" height="5.600" rx="2.800" fill="none" stroke="#ffffff" stroke-width="2.4"/><rect x="9.5" y="-2.800" width="12" height="5.600" rx="2.800" fill="none" stroke="#ffffff" stroke-width="2.4"/><path d="M9.500 2.800h2.500" stroke="#3b4252" stroke-width="1"/></g></g>
<g transform="translate(845.30,65.50)"><path d="M0.800 9.300l3.500-4.400h13.400l-3.500 4.400z" fill="#8fc4f0"/><path d="M0.800 9.300h13.400v13.300h-13.400z" fill="#5fa4e3"/><path d="M14.200 9.300l3.500-4.400v13l-3.500 4z" fill="#4a8fd2"/><path d="M0.700 22.700h13.200v11.300h-13.200z" fill="#dedede"/><path d="M14.700 20l3.300-1.700h12.500l-3.300 1.700z" fill="#f2f2f2"/><path d="M14.700 20h12.500v14h-12.500z" fill="#dedede"/><path d="M27.200 20l3.300-1.700v12.200l-3.300 3.500z" fill="#c2c2c2"/><path d="M17.7 9.0h18.4M26.9 -0.2v18.4" stroke="#2fb04e" stroke-width="5.0"/></g>
<g transform="translate(893.00,67.50)"><rect x="0" y="18.500" width="16" height="13" fill="#dedede"/><path d="M17.300 0v32" stroke="#e8685a" stroke-width="1.300"/><rect x="19.500" y="0.300" width="15.500" height="13.200" fill="#8ecbf6"/></g>
<g transform="translate(940.50,65.50)"><rect x="0.500" y="0.500" width="7" height="6.500" fill="#8ecbf6"/><rect x="0.500" y="8" width="7" height="6.500" fill="#dedede"/><rect x="8.500" y="8" width="6.500" height="6.500" fill="#dedede"/><path d="M7 14.500v18.500M7 19.500h8M7 26h8M7 31.500h8" stroke="#aeb3bf" stroke-width="1.300" fill="none"/><rect x="17" y="9" width="19" height="26.500" fill="#dedede"/><rect x="17" y="9" width="19" height="3.500" fill="#9a9a9a"/><path d="M17 17h19M17 21.500h19M17 26h19M17 30.500h19M21.500 12.500v23" stroke="#a8a8a8" stroke-width="1" fill="none"/></g>
<g transform="translate(1004.00,65.50)"><path d="M0.500 8l8-7.500h23l-6.500 7.500z" fill="#f2f2f2"/><path d="M0.500 8h24.500v23h-24.500z" fill="#dedede"/><path d="M25 8l6.500-7.500v22l-6.500 8.500z" fill="#c2c2c2"/><g transform="translate(20.5,23.5)"><path d="M0 2.500h15M0 9h15" stroke="#dcdcdc" stroke-width="2"/><rect x="3" y="0" width="3" height="5.500" fill="#5fb2f2"/><rect x="10" y="6.500" width="2.600" height="5.500" fill="#dcdcdc"/></g></g>
<g transform="translate(1052.00,65.50)"><rect x="0.500" y="0.500" width="33" height="30.500" fill="#f2f2f2"/><rect x="0.500" y="0.500" width="33" height="6" fill="#a4a4a4"/><rect x="3" y="2.500" width="4" height="2" fill="#555"/><rect x="4" y="10.500" width="26" height="16.500" fill="#bdbdbd"/><rect x="5.0" y="11.5" width="4.5" height="4" fill="#fafafa"/><rect x="10.5" y="11.5" width="4.5" height="4" fill="#fafafa"/><rect x="16.0" y="11.5" width="13.0" height="4" fill="#fafafa"/><rect x="5.0" y="16.7" width="4.5" height="4" fill="#fafafa"/><rect x="10.5" y="16.7" width="4.5" height="4" fill="#fafafa"/><rect x="16.0" y="16.7" width="13.0" height="4" fill="#fafafa"/><rect x="5.0" y="21.9" width="4.5" height="4" fill="#fafafa"/><rect x="10.5" y="21.9" width="4.5" height="4" fill="#fafafa"/><rect x="16.0" y="21.9" width="13.0" height="4" fill="#fafafa"/><g transform="translate(20.5,23.5)"><path d="M0 2.500h15M0 9h15" stroke="#dcdcdc" stroke-width="2"/><rect x="3" y="0" width="3" height="5.500" fill="#5fb2f2"/><rect x="10" y="6.500" width="2.600" height="5.500" fill="#dcdcdc"/></g></g>
<g transform="translate(1145.00,65.50)"><path d="M0.500 12l10-11.500h8.500l-9.500 11.500z" fill="#f2f2f2"/><path d="M0.500 12h9v23h-9z" fill="#dedede"/><path d="M10.500 12l10-11.500v22l-10 12z" fill="#6fcf8f"/><path d="M24.500 12l9.500-11v21.500l-9.500 11.500z" fill="#f5a873"/></g>
<g transform="translate(1250.30,72.80)"><path d="M1 0v10M31.500 0v10M3 5h26.500" stroke="#f4f4f4" stroke-width="1.300" fill="none"/><path d="M1.600 5l4.500-2.500v5zM31 5l-4.500-2.500v5z" fill="#f4f4f4"/><rect x="0.300" y="11.500" width="32" height="7" fill="#f5cf6a"/><path d="M4 11.500v3M8 11.500v2M12 11.500v3M16 11.500v2M20 11.500v3M24 11.500v2M28 11.500v3" stroke="#b8933a" stroke-width="1"/></g>
<g transform="translate(1327.70,67.00)"><path d="M2 0.500h23l2 2.500v6h-27v-6z" fill="#7fbdf0"/><path d="M2 0.500h23l1 1.500h-25z" fill="#b7dcfa"/><rect x="6.500" y="9" width="13.500" height="23" fill="#7fbdf0"/><path d="M6.500 32h13.500l-2 2h-9.500z" fill="#5a9fdc"/><path d="M6.500 12h13.500M6.500 15h13.500M6.500 18h13.500M6.500 21h13.500M6.500 24h13.500M6.500 27h13.500M6.500 30h13.500" stroke="#a9d4f7" stroke-width="1"/><path d="M18.0 26.0h16.0M26.0 18.0v16.0" stroke="#5ec66e" stroke-width="5.0"/></g>
<g transform="translate(1374.00,67.00)"><rect x="0.300" y="0.300" width="32.500" height="31.500" fill="#7fbdf0"/><path d="M0.300 31.800v-10l9.500-9 9 10 5.500-5 8.500 8v6z" fill="#4a8fc9"/><circle cx="23.500" cy="8" r="3.200" fill="#f7e27a"/></g>
<g transform="translate(1442.50,62.00)"><rect x="0.500" y="0.500" width="42" height="42" fill="#2e4760" stroke="#3f7098" stroke-width="1"/><rect x="4.500" y="4.500" width="29" height="22.500" fill="none" stroke="#5fd07a" stroke-width="1.500" stroke-dasharray="3.500 2"/><path d="M26.500 19.500l12 11-5 .5 3 6-2.500 1.200-3-6-4 3.500z" fill="#ffffff" stroke="#2e4760" stroke-width=".6"/></g>
<path d="M485.4 65.500v55.500" stroke="#586073" stroke-width="1.200"/>
<path d="M784.8 65.500v55.500" stroke="#586073" stroke-width="1.200"/>
<path d="M987.5 65.500v55.500" stroke="#586073" stroke-width="1.200"/>
<path d="M1103.3 65.500v55.500" stroke="#586073" stroke-width="1.200"/>
<path d="M1218.6 65.500v55.500" stroke="#586073" stroke-width="1.200"/>
<path d="M1312.2 65.500v55.500" stroke="#586073" stroke-width="1.200"/>
<path d="M1420.0 65.500v55.500" stroke="#586073" stroke-width="1.200"/>
<path d="M331.0 112.5h7l-3.500 4.500z" fill="#a0a4ae"/>
<path d="M657.5 112.5h7l-3.500 4.500z" fill="#a0a4ae"/>
<path d="M916.5 112.5h7l-3.500 4.500z" fill="#a0a4ae"/>
<path d="M1081.2 112.5h7l-3.500 4.500z" fill="#a0a4ae"/>
<path d="M1197.3 112.5h7l-3.500 4.500z" fill="#a0a4ae"/>
<path d="M1292.3 112.5h7l-3.500 4.500z" fill="#a0a4ae"/>
<path d="M1385.2 112.5h7l-3.500 4.500z" fill="#a0a4ae"/>
<path d="M1484.0 112.5h7l-3.500 4.500z" fill="#a0a4ae"/>
<rect x="154" y="58" width="65.500" height="3.800" fill="#f2f2f2"/>
</svg>
<!-- browser -->
<div style="position:absolute;left:4.700px;top:135.200px;width:332.800px;height:26.600px;background:#3b4252"></div>
<span class="t" style="left:36.20px;top:140.45px;font-size:13.7px;line-height:16px;color:#eef0f3; transform:scaleX(0.8704);">BROWSER</span>
<div style="position:absolute;left:44.4px;top:168.10px;width:137.6px;height:21.6px;background:#3b4252"></div>
<div style="position:absolute;left:72.300px;top:168.10px;width:82.200px;height:21.6px;background:#222834"></div>
<span class="t" style="left:108.80px;top:172.24px;font-size:12px;line-height:14px;color:#fbfbfc;font-weight:bold; transform:scaleX(1.1155);">V1 v4</span>
<div style="position:absolute;left:64.6px;top:194.77px;width:166.4px;height:21.6px;background:#3b4252"></div>
<span class="t" style="left:101.50px;top:198.91px;font-size:12px;line-height:14px;color:#fbfbfc; transform:scaleX(1.0949);-webkit-text-stroke:.4px #fbfbfc;">Document Settings</span>
<div style="position:absolute;left:64.6px;top:221.43px;width:130.8px;height:21.6px;background:#3b4252"></div>
<span class="t" style="left:101.50px;top:225.58px;font-size:12px;line-height:14px;color:#fbfbfc; transform:scaleX(1.0617);-webkit-text-stroke:.4px #fbfbfc;">Named Views</span>
<div style="position:absolute;left:64.6px;top:248.10px;width:114.2px;height:21.6px;background:#3b4252"></div>
<span class="t" style="left:129.00px;top:252.24px;font-size:12px;line-height:14px;color:#fbfbfc; transform:scaleX(1.1250);-webkit-text-stroke:.4px #fbfbfc;">Origin</span>
<div style="position:absolute;left:64.6px;top:274.77px;width:118.5px;height:21.6px;background:#3b4252"></div>
<span class="t" style="left:129.00px;top:278.91px;font-size:12px;line-height:14px;color:#fbfbfc; transform:scaleX(1.0313);-webkit-text-stroke:.4px #fbfbfc;">Bodies</span>
<div style="position:absolute;left:84.6px;top:301.43px;width:136.1px;height:21.6px;background:#3b4252"></div>
<span class="t" style="left:149.50px;top:305.58px;font-size:12px;line-height:14px;color:#fbfbfc; transform:scaleX(0.9661);-webkit-text-stroke:.4px #fbfbfc;">BALLS (9)</span>
<div style="position:absolute;left:84.6px;top:328.10px;width:149.2px;height:21.6px;background:#3b4252"></div>
<span class="t" style="left:149.50px;top:332.24px;font-size:12px;line-height:14px;color:#fbfbfc; transform:scaleX(0.9486);-webkit-text-stroke:.4px #fbfbfc;">LEVERS (12)</span>
<div style="position:absolute;left:84.6px;top:354.77px;width:105.1px;height:21.6px;background:#3b4252"></div>
<span class="t" style="left:149.50px;top:358.91px;font-size:12px;line-height:14px;color:#fbfbfc; transform:scaleX(1.0577);-webkit-text-stroke:.4px #fbfbfc;">lever</span>
<div style="position:absolute;left:84.6px;top:381.43px;width:123.0px;height:21.6px;background:#3b4252"></div>
<span class="t" style="left:149.50px;top:385.58px;font-size:12px;line-height:14px;color:#fbfbfc; transform:scaleX(1.0307);-webkit-text-stroke:.4px #fbfbfc;">Body52</span>
<div style="position:absolute;left:84.6px;top:408.10px;width:123.0px;height:21.6px;background:#3b4252"></div>
<span class="t" style="left:149.50px;top:412.24px;font-size:12px;line-height:14px;color:#fbfbfc; transform:scaleX(1.0750);-webkit-text-stroke:.4px #fbfbfc;">dice (1)</span>
<div style="position:absolute;left:64.6px;top:434.77px;width:132.0px;height:21.6px;background:#3b4252"></div>
<span class="t" style="left:129.00px;top:438.91px;font-size:12px;line-height:14px;color:#fbfbfc; transform:scaleX(1.0329);-webkit-text-stroke:.4px #fbfbfc;">Sketches</span>
<div style="position:absolute;left:64.6px;top:461.43px;width:91.8px;height:21.6px;background:#3b4252"></div>
<span class="t" style="left:129.00px;top:465.58px;font-size:12px;line-height:14px;color:#fbfbfc; transform:scaleX(0.9722);-webkit-text-stroke:.4px #fbfbfc;">B:1</span>
<div style="position:absolute;left:64.6px;top:488.10px;width:91.8px;height:21.6px;background:#3b4252"></div>
<span class="t" style="left:129.00px;top:492.24px;font-size:12px;line-height:14px;color:#fbfbfc; transform:scaleX(0.9235);-webkit-text-stroke:.4px #fbfbfc;">C:1</span>
<div style="position:absolute;left:64.6px;top:514.77px;width:163.0px;height:21.6px;background:#3b4252"></div>
<span class="t" style="left:129.00px;top:518.91px;font-size:12px;line-height:14px;color:#fbfbfc; transform:scaleX(1.1073);-webkit-text-stroke:.4px #fbfbfc;">Component4:1</span>
<div style="position:absolute;left:64.6px;top:541.43px;width:96.4px;height:21.6px;background:#3b4252"></div>
<span class="t" style="left:129.00px;top:545.58px;font-size:12px;line-height:14px;color:#fbfbfc; transform:scaleX(1.0556);-webkit-text-stroke:.4px #fbfbfc;">A:3</span>
<svg style="position:absolute;left:0;top:130px" width="345" height="440" viewBox="0 130 345 440">
<path d="M16.500 144.500l-4 3.500 4 3.500zM21 144.500l-4 3.500 4 3.500z" fill="#6f7686"/>
<path d="M314 147.700h9.500" stroke="#8e95a5" stroke-width="1.400"/>
<path d="M23.80 176.90l4.600 4.300 4.600-4.300" fill="none" stroke="#3c3c3c" stroke-width="3.200"/><path d="M23.80 176.90l4.600 4.300 4.600-4.300" fill="none" stroke="#ffffff" stroke-width="1"/>
<g transform="translate(47.80,178.90)"><path d="M0 0c3-4.300 6-5.700 8.800-5.700s5.800 1.400 8.800 5.700c-3 4.300-6 5.700-8.800 5.700s-5.800-1.400-8.800-5.700z" fill="#dcdcdc"/><circle cx="8.800" cy="0" r="3.700" fill="#5a6070"/><circle cx="8.800" cy="0" r="1.700" fill="#dcdcdc"/></g>
<g transform="translate(74.80,169.90)"><path d="M1 3l2-2.800h7l-1.800 2.800z" fill="#b3dcfa"/><path d="M1 3h7.200v7.500h-7.200z" fill="#86c5f4"/><path d="M8.200 3l1.800-2.800v7.500l-1.800 2.800z" fill="#5ea6e0"/><rect x="1" y="11.200" width="6.500" height="6.300" fill="#dedede"/><path d="M9 11.200l2-2.500h6.500l-2 2.500z" fill="#f0f0f0"/><rect x="9" y="11.200" width="6.500" height="6.300" fill="#dedede"/><path d="M15.500 11.200l2-2.500v6.300l-2 2.500z" fill="#c2c2c2"/></g>
<circle cx="166.800" cy="178.90" r="5.200" fill="none" stroke="#ffffff" stroke-width="3.200"/>
<path d="M46.50 200.97l4.300 4.600-4.300 4.600" fill="none" stroke="#3c3c3c" stroke-width="3.200" stroke-linejoin="miter"/><path d="M46.50 200.97l4.300 4.600-4.300 4.600" fill="none" stroke="#ffffff" stroke-width="1" stroke-linejoin="miter"/>
<path d="M85.31 204.31 L85.31 206.82 L82.90 207.10 L82.12 209.01 L83.62 210.91 L81.84 212.68 L79.94 211.18 L78.04 211.97 L77.75 214.38 L75.25 214.38 L74.96 211.97 L73.06 211.18 L71.16 212.68 L69.38 210.91 L70.88 209.01 L70.10 207.10 L67.69 206.82 L67.69 204.31 L70.10 204.03 L70.88 202.13 L69.38 200.22 L71.16 198.45 L73.06 199.95 L74.96 199.16 L75.25 196.76 L77.75 196.76 L78.04 199.16 L79.94 199.95 L81.84 198.45 L83.62 200.22 L82.12 202.13 L82.90 204.03 z" fill="#a3a9ba"/><circle cx="76.50" cy="205.57" r="3.20" fill="#3b4252"/>
<path d="M46.50 227.63l4.300 4.600-4.300 4.600" fill="none" stroke="#3c3c3c" stroke-width="3.200" stroke-linejoin="miter"/><path d="M46.50 227.63l4.300 4.600-4.300 4.600" fill="none" stroke="#ffffff" stroke-width="1" stroke-linejoin="miter"/>
<g transform="translate(68.00,224.23)"><path d="M0 0h6.500l1.800 2.300h-8.300z" fill="#bdbdbd"/><path d="M0 2.800h9.500v-.3l1-.8h7.400v13.700h-17.900z" fill="#dadada"/></g>
<path d="M46.50 254.30l4.300 4.600-4.300 4.600" fill="none" stroke="#3c3c3c" stroke-width="3.200" stroke-linejoin="miter"/><path d="M46.50 254.30l4.300 4.600-4.300 4.600" fill="none" stroke="#ffffff" stroke-width="1" stroke-linejoin="miter"/>
<g transform="translate(68.00,258.90)" fill="none" stroke="#d8d8d8" stroke-width="1.100"><path d="M0 0c3-4.300 6-5.700 8.800-5.700s5.800 1.400 8.800 5.700c-3 4.300-6 5.700-8.800 5.700s-5.800-1.400-8.800-5.700z"/><circle cx="8.800" cy="0" r="3"/><path d="M3.500 -6.500l11 13" stroke-width="1.300"/></g>
<g transform="translate(95.50,250.90)"><path d="M0 0h6.500l1.800 2.300h-8.300z" fill="#bdbdbd"/><path d="M0 2.800h9.500v-.3l1-.8h7.400v13.700h-17.900z" fill="#dadada"/></g>
<path d="M45.00 283.57l4.600 4.300 4.600-4.300" fill="none" stroke="#3c3c3c" stroke-width="3.200"/><path d="M45.00 283.57l4.600 4.300 4.600-4.300" fill="none" stroke="#ffffff" stroke-width="1"/>
<g transform="translate(68.00,285.57)"><path d="M0 0c3-4.300 6-5.700 8.800-5.700s5.800 1.400 8.800 5.700c-3 4.300-6 5.700-8.800 5.700s-5.800-1.400-8.800-5.700z" fill="#dcdcdc"/><circle cx="8.800" cy="0" r="3.700" fill="#5a6070"/><circle cx="8.800" cy="0" r="1.700" fill="#dcdcdc"/></g>
<g transform="translate(95.50,277.57)"><path d="M0 0h6.500l1.800 2.300h-8.300z" fill="#bdbdbd"/><path d="M0 2.800h9.500v-.3l1-.8h7.400v13.700h-17.900z" fill="#dadada"/></g>
<path d="M66.80 307.63l4.300 4.600-4.300 4.600" fill="none" stroke="#3c3c3c" stroke-width="3.200" stroke-linejoin="miter"/><path d="M66.80 307.63l4.300 4.600-4.300 4.600" fill="none" stroke="#ffffff" stroke-width="1" stroke-linejoin="miter"/>
<g transform="translate(88.00,312.23)"><path d="M0 0c3-4.300 6-5.700 8.800-5.700s5.800 1.400 8.800 5.700c-3 4.300-6 5.700-8.800 5.700s-5.800-1.400-8.800-5.700z" fill="#dcdcdc"/><circle cx="8.800" cy="0" r="3.700" fill="#5a6070"/><circle cx="8.800" cy="0" r="1.700" fill="#dcdcdc"/></g>
<g transform="translate(115.50,304.23)"><path d="M0 0h6.500l1.800 2.300h-8.300z" fill="#bdbdbd"/><path d="M0 2.800h9.500v-.3l1-.8h7.400v13.700h-17.900z" fill="#dadada"/></g>
<path d="M66.80 334.30l4.300 4.600-4.300 4.600" fill="none" stroke="#3c3c3c" stroke-width="3.200" stroke-linejoin="miter"/><path d="M66.80 334.30l4.300 4.600-4.300 4.600" fill="none" stroke="#ffffff" stroke-width="1" stroke-linejoin="miter"/>
<g transform="translate(88.00,338.90)"><path d="M0 0c3-4.300 6-5.700 8.800-5.700s5.800 1.400 8.800 5.700c-3 4.300-6 5.700-8.800 5.700s-5.800-1.400-8.800-5.700z" fill="#dcdcdc"/><circle cx="8.800" cy="0" r="3.700" fill="#5a6070"/><circle cx="8.800" cy="0" r="1.700" fill="#dcdcdc"/></g>
<g transform="translate(115.50,330.90)"><path d="M0 0h6.500l1.800 2.300h-8.300z" fill="#bdbdbd"/><path d="M0 2.800h9.500v-.3l1-.8h7.400v13.700h-17.900z" fill="#dadada"/></g>
<g transform="translate(88.00,365.57)"><path d="M0 0c3-4.300 6-5.700 8.800-5.700s5.800 1.400 8.800 5.700c-3 4.300-6 5.700-8.800 5.700s-5.800-1.400-8.800-5.700z" fill="#dcdcdc"/><circle cx="8.800" cy="0" r="3.700" fill="#5a6070"/><circle cx="8.800" cy="0" r="1.700" fill="#dcdcdc"/></g>
<g transform="translate(116.50,357.27)"><path d="M0 2.800v11c0 1.500 3.600 2.800 8 2.800s8-1.300 8-2.800v-11z" fill="#86c5f4"/><ellipse cx="8" cy="2.800" rx="8" ry="2.800" fill="#b3dcfa"/></g>
<g transform="translate(88.00,392.23)"><path d="M0 0c3-4.300 6-5.700 8.800-5.700s5.800 1.400 8.800 5.700c-3 4.300-6 5.700-8.800 5.700s-5.800-1.400-8.800-5.700z" fill="#dcdcdc"/><circle cx="8.800" cy="0" r="3.700" fill="#5a6070"/><circle cx="8.800" cy="0" r="1.700" fill="#dcdcdc"/></g>
<g transform="translate(116.50,383.93)"><path d="M0 2.800v11c0 1.500 3.600 2.800 8 2.800s8-1.300 8-2.800v-11z" fill="#86c5f4"/><ellipse cx="8" cy="2.800" rx="8" ry="2.800" fill="#b3dcfa"/></g>
<g transform="translate(88.00,418.90)"><path d="M0 0c3-4.300 6-5.700 8.800-5.700s5.800 1.400 8.800 5.700c-3 4.300-6 5.700-8.800 5.700s-5.800-1.400-8.800-5.700z" fill="#dcdcdc"/><circle cx="8.800" cy="0" r="3.700" fill="#5a6070"/><circle cx="8.800" cy="0" r="1.700" fill="#dcdcdc"/></g>
<g transform="translate(116.50,410.60)"><path d="M0 2.800v11c0 1.500 3.600 2.800 8 2.800s8-1.300 8-2.800v-11z" fill="#86c5f4"/><ellipse cx="8" cy="2.800" rx="8" ry="2.800" fill="#b3dcfa"/></g>
<path d="M46.50 440.97l4.300 4.600-4.300 4.600" fill="none" stroke="#3c3c3c" stroke-width="3.200" stroke-linejoin="miter"/><path d="M46.50 440.97l4.300 4.600-4.300 4.600" fill="none" stroke="#ffffff" stroke-width="1" stroke-linejoin="miter"/>
<g transform="translate(68.00,445.57)"><path d="M0 0c3-4.300 6-5.700 8.800-5.700s5.800 1.400 8.800 5.700c-3 4.300-6 5.700-8.800 5.700s-5.800-1.400-8.800-5.700z" fill="#dcdcdc"/><circle cx="8.800" cy="0" r="3.700" fill="#5a6070"/><circle cx="8.800" cy="0" r="1.700" fill="#dcdcdc"/></g>
<g transform="translate(95.50,437.57)"><path d="M0 0h6.500l1.800 2.300h-8.300z" fill="#bdbdbd"/><path d="M0 2.800h9.500v-.3l1-.8h7.400v13.700h-17.900z" fill="#dadada"/></g>
<path d="M46.50 467.63l4.300 4.600-4.300 4.600" fill="none" stroke="#3c3c3c" stroke-width="3.200" stroke-linejoin="miter"/><path d="M46.50 467.63l4.300 4.600-4.300 4.600" fill="none" stroke="#ffffff" stroke-width="1" stroke-linejoin="miter"/>
<g transform="translate(68.00,472.23)"><path d="M0 0c3-4.300 6-5.700 8.800-5.700s5.800 1.400 8.800 5.700c-3 4.300-6 5.700-8.800 5.700s-5.800-1.400-8.800-5.700z" fill="#dcdcdc"/><circle cx="8.800" cy="0" r="3.700" fill="#5a6070"/><circle cx="8.800" cy="0" r="1.700" fill="#dcdcdc"/></g>
<g transform="translate(96.00,463.93)"><path d="M0 4l4-4h12l-4 4z" fill="#b3dcfa"/><path d="M0 4h12v12.500h-12z" fill="#86c5f4"/><path d="M12 4l4-4v12l-4 4.500z" fill="#5ea6e0"/></g>
<path d="M46.50 494.30l4.300 4.600-4.300 4.600" fill="none" stroke="#3c3c3c" stroke-width="3.200" stroke-linejoin="miter"/><path d="M46.50 494.30l4.300 4.600-4.300 4.600" fill="none" stroke="#ffffff" stroke-width="1" stroke-linejoin="miter"/>
<g transform="translate(68.00,498.90)"><path d="M0 0c3-4.300 6-5.700 8.800-5.700s5.800 1.400 8.800 5.700c-3 4.300-6 5.700-8.800 5.700s-5.800-1.400-8.800-5.700z" fill="#dcdcdc"/><circle cx="8.800" cy="0" r="3.700" fill="#5a6070"/><circle cx="8.800" cy="0" r="1.700" fill="#dcdcdc"/></g>
<g transform="translate(96.00,490.60)"><path d="M0 4l4-4h12l-4 4z" fill="#b3dcfa"/><path d="M0 4h12v12.500h-12z" fill="#86c5f4"/><path d="M12 4l4-4v12l-4 4.500z" fill="#5ea6e0"/></g>
<path d="M46.50 520.97l4.300 4.600-4.300 4.600" fill="none" stroke="#3c3c3c" stroke-width="3.200" stroke-linejoin="miter"/><path d="M46.50 520.97l4.300 4.600-4.300 4.600" fill="none" stroke="#ffffff" stroke-width="1" stroke-linejoin="miter"/>
<g transform="translate(68.00,525.57)"><path d="M0 0c3-4.300 6-5.700 8.800-5.700s5.800 1.400 8.800 5.700c-3 4.300-6 5.700-8.800 5.700s-5.800-1.400-8.800-5.700z" fill="#dcdcdc"/><circle cx="8.800" cy="0" r="3.700" fill="#5a6070"/><circle cx="8.800" cy="0" r="1.700" fill="#dcdcdc"/></g>
<g transform="translate(96.00,517.27)"><path d="M0 4l4-4h12l-4 4z" fill="#b3dcfa"/><path d="M0 4h12v12.500h-12z" fill="#86c5f4"/><path d="M12 4l4-4v12l-4 4.500z" fill="#5ea6e0"/></g>
<path d="M46.50 547.63l4.300 4.600-4.300 4.600" fill="none" stroke="#3c3c3c" stroke-width="3.200" stroke-linejoin="miter"/><path d="M46.50 547.63l4.300 4.600-4.300 4.600" fill="none" stroke="#ffffff" stroke-width="1" stroke-linejoin="miter"/>
<g transform="translate(68.00,552.23)"><path d="M0 0c3-4.300 6-5.700 8.800-5.700s5.800 1.400 8.800 5.700c-3 4.300-6 5.700-8.800 5.700s-5.800-1.400-8.800-5.700z" fill="#dcdcdc"/><circle cx="8.800" cy="0" r="3.700" fill="#5a6070"/><circle cx="8.800" cy="0" r="1.700" fill="#dcdcdc"/></g>
<g transform="translate(96.00,543.93)"><path d="M0 4l4-4h12l-4 4z" fill="#b3dcfa"/><path d="M0 4h12v12.500h-12z" fill="#86c5f4"/><path d="M12 4l4-4v12l-4 4.500z" fill="#5ea6e0"/></g>
<g transform="translate(95.5,542.7)" stroke="#f0f0f0" stroke-width="1.100" fill="none"><circle cx="3.500" cy="1.200" r="1.100"/><path d="M3.500 2.300v6.200M1.200 4h4.600M0.300 6c.3 1.800 1.600 2.600 3.200 2.600s2.900-.8 3.200-2.600"/></g>
</svg>
<!-- bottom -->
<div style="position:absolute;left:4.700px;top:912.300px;width:332.800px;height:27.500px;background:#3b4252"></div>
<span class="t" style="left:35.80px;top:918.35px;font-size:13.7px;line-height:16px;color:#eef0f3; transform:scaleX(0.8997);">COMMENTS</span>
<div style="position:absolute;left:667.900px;top:911px;width:265.200px;height:26.400px;background:#3b4252"></div>
<div style="position:absolute;left:0;top:944.500px;width:1600px;height:56px;background:#3b4252"></div>
<svg style="position:absolute;left:0;top:900px" width="1600" height="100" viewBox="0 900 1600 100">
<defs>
<g id="tm"><path d="M8.25 0l3.14 3.30h-6.27z M8.25 16.50l3.14 -3.30h-6.27z M0 8.25l3.30 -3.14v6.27z M16.50 8.25l-3.30 -3.14v6.27z" fill="#ffffff"/><path d="M8.25 2.80v10.90M2.80 8.25h10.90" stroke="#ffffff" stroke-width="2.48"/></g>
<g id="ts"><path d="M2.500 1.600h11.500M1.600 2.500v11.500M15 2.500v6M2.500 15h6" stroke="#c9ccd3" stroke-width="1.300" fill="none"/><rect x="0.0" y="0.0" width="2.800" height="2.800" fill="#56b4ee"/><rect x="13.4" y="0.0" width="2.800" height="2.800" fill="#56b4ee"/><rect x="0.0" y="13.4" width="2.800" height="2.800" fill="#56b4ee"/><g transform="translate(8.300,17.600) rotate(-42)"><path d="M0 0l3.200-1.900v3.800z" fill="#ffffff"/><rect x="3.200" y="-1.900" width="6.500" height="3.800" fill="#f4c95d"/><rect x="9.700" y="-1.900" width="2.600" height="3.800" rx=".8" fill="#ea6a5e"/></g></g>
<g id="te"><path d="M0 15.500h10.800l3-2.500v3.200l-3 2.800h-10.800z" fill="#c9c9c9"/><path d="M0 15.500h10.800v3.300h-10.800z" fill="#f2f2f2"/><path d="M0 3l3-3h10.800l-3 3z" fill="#aadafb"/><path d="M0 3h10.800v12.700h-10.800z" fill="#8ecbf6"/><path d="M10.800 3l3-3v13l-3 2.700z" fill="#66ade5"/><path d="M16.800 15.500v-10" stroke="#f4f4f4" stroke-width="1.200"/><path d="M16.800 1.600l2 4.200h-4z" fill="#f4f4f4"/></g>
<g id="tf" transform="scale(.51)"><path d="M0 10l9-9.500h8l-6 7.500z" fill="#f2f2f2"/><path d="M0 10h14c7 0 13 5 13 13v13h-27z" fill="#dedede"/><path d="M27 23l8.500-6.500v11l-8.500 8.500z" fill="#c2c2c2"/><path d="M11 8l6-7.500c10 0 18.500 7 18.500 16l-8.500 6.500c0-8-6-15-16-15z" fill="#8ecbf6"/><path d="M11 8c10 0 16 7 16 15" stroke="#2f3644" stroke-width="1.200" fill="none"/></g>
<g id="tc" transform="scale(.5)"><path d="M12 6.500l5-6h18.500l-5 6z" fill="#aadafb"/><path d="M12 6.500h18.500v17h-18.500z" fill="#8ecbf6"/><path d="M30.500 6.500l5-6v17.500l-5 5.500z" fill="#66ade5"/><path d="M0.300 18l4.500-5.500h19l-4.500 5.500z" fill="#aadafb"/><path d="M0.300 18h19v18h-19z" fill="#8ecbf6"/><path d="M19.300 18l4.500-5.500v5.500h6.700l-5.500 5.500h-1.200v7l-4.500 5.500z" fill="#66ade5"/></g>
<g id="ty"><path d="M0 3.500v10c0 2 4 3.500 9 3.500s9-1.500 9-3.500v-10z" fill="#8ecbf6"/><ellipse cx="9" cy="3.500" rx="9" ry="3.300" fill="#aadafb"/></g>
</defs>
<path d="M318.500 921.500v8.600M314.200 925.800h8.600" stroke="#9aa1b2" stroke-width="1.600"/>
<path d="M164 992.200h1368.500" stroke="#5d6578" stroke-width="2.200"/>
<path d="M152 992.300h10" stroke="#5d6578" stroke-width="1.600" stroke-dasharray="2.500 2"/>
<path d="M170.50 985.500v7" stroke="#5d6578" stroke-width="1.900"/>
<use href="#tm" x="162.25" y="964.50"/>
<path d="M197.17 985.500v7" stroke="#5d6578" stroke-width="1.900"/>
<use href="#ts" x="187.87" y="964.30"/>
<path d="M223.83 985.500v7" stroke="#5d6578" stroke-width="1.900"/>
<use href="#te" x="215.53" y="963.50"/>
<path d="M250.50 985.500v7" stroke="#5d6578" stroke-width="1.900"/>
<use href="#tm" x="242.25" y="964.50"/>
<path d="M277.17 985.500v7" stroke="#5d6578" stroke-width="1.900"/>
<use href="#tm" x="268.92" y="964.50"/>
<path d="M303.83 985.500v7" stroke="#5d6578" stroke-width="1.900"/>
<use href="#tm" x="295.58" y="964.50"/>
<path d="M330.50 985.500v7" stroke="#5d6578" stroke-width="1.900"/>
<use href="#tm" x="322.25" y="964.50"/>
<path d="M357.17 985.500v7" stroke="#5d6578" stroke-width="1.900"/>
<use href="#tm" x="348.92" y="964.50"/>
<path d="M383.83 985.500v7" stroke="#5d6578" stroke-width="1.900"/>
<use href="#tm" x="375.58" y="964.50"/>
<path d="M410.50 985.500v7" stroke="#5d6578" stroke-width="1.900"/>
<use href="#tm" x="402.25" y="964.50"/>
<path d="M437.17 985.500v7" stroke="#5d6578" stroke-width="1.900"/>
<use href="#tm" x="428.92" y="964.50"/>
<path d="M463.83 985.500v7" stroke="#5d6578" stroke-width="1.900"/>
<use href="#tm" x="455.58" y="964.50"/>
<path d="M490.50 985.500v7" stroke="#5d6578" stroke-width="1.900"/>
<use href="#tm" x="482.25" y="964.50"/>
<path d="M517.17 985.500v7" stroke="#5d6578" stroke-width="1.900"/>
<use href="#tc" x="508.17" y="964.00"/>
<path d="M543.83 985.500v7" stroke="#5d6578" stroke-width="1.900"/>
<use href="#ts" x="534.53" y="964.30"/>
<path d="M570.50 985.500v7" stroke="#5d6578" stroke-width="1.900"/>
<use href="#te" x="562.20" y="963.50"/>
<path d="M597.17 985.500v7" stroke="#5d6578" stroke-width="1.900"/>
<use href="#te" x="588.87" y="963.50"/>
<path d="M623.83 985.500v7" stroke="#5d6578" stroke-width="1.900"/>
<use href="#tm" x="615.58" y="964.50"/>
<path d="M650.50 985.500v7" stroke="#5d6578" stroke-width="1.900"/>
<use href="#tc" x="641.50" y="964.00"/>
<path d="M677.17 985.500v7" stroke="#5d6578" stroke-width="1.900"/>
<use href="#te" x="668.87" y="963.50"/>
<path d="M703.83 985.500v7" stroke="#5d6578" stroke-width="1.900"/>
<use href="#tm" x="695.58" y="964.50"/>
<path d="M730.50 985.500v7" stroke="#5d6578" stroke-width="1.900"/>
<use href="#ts" x="721.20" y="964.30"/>
<path d="M757.17 985.500v7" stroke="#5d6578" stroke-width="1.900"/>
<use href="#te" x="748.87" y="963.50"/>
<path d="M783.83 985.500v7" stroke="#5d6578" stroke-width="1.900"/>
<use href="#tm" x="775.58" y="964.50"/>
<path d="M810.50 985.500v7" stroke="#5d6578" stroke-width="1.900"/>
<use href="#tc" x="801.50" y="964.00"/>
<path d="M837.17 985.500v7" stroke="#5d6578" stroke-width="1.900"/>
<use href="#tc" x="828.17" y="964.00"/>
<path d="M863.83 985.500v7" stroke="#5d6578" stroke-width="1.900"/>
<use href="#ts" x="854.53" y="964.30"/>
<path d="M890.50 985.500v7" stroke="#5d6578" stroke-width="1.900"/>
<use href="#te" x="882.20" y="963.50"/>
<path d="M917.17 985.500v7" stroke="#5d6578" stroke-width="1.900"/>
<use href="#ts" x="907.87" y="964.30"/>
<path d="M943.83 985.500v7" stroke="#5d6578" stroke-width="1.900"/>
<use href="#te" x="935.53" y="963.50"/>
<path d="M970.50 985.500v7" stroke="#5d6578" stroke-width="1.900"/>
<use href="#tf" x="961.30" y="963.60"/>
<path d="M997.17 985.500v7" stroke="#5d6578" stroke-width="1.900"/>
<use href="#tf" x="987.97" y="963.60"/>
<path d="M1023.83 985.500v7" stroke="#5d6578" stroke-width="1.900"/>
<use href="#ts" x="1014.53" y="964.30"/>
<path d="M1050.50 985.500v7" stroke="#5d6578" stroke-width="1.900"/>
<use href="#ts" x="1041.20" y="964.30"/>
<path d="M1077.17 985.500v7" stroke="#5d6578" stroke-width="1.900"/>
<use href="#te" x="1068.87" y="963.50"/>
<path d="M1103.83 985.500v7" stroke="#5d6578" stroke-width="1.900"/>
<use href="#tf" x="1094.63" y="963.60"/>
<path d="M1130.50 985.500v7" stroke="#5d6578" stroke-width="1.900"/>
<use href="#ts" x="1121.20" y="964.30"/>
<path d="M1157.17 985.500v7" stroke="#5d6578" stroke-width="1.900"/>
<use href="#te" x="1148.87" y="963.50"/>
<path d="M1183.83 985.500v7" stroke="#5d6578" stroke-width="1.900"/>
<use href="#ts" x="1174.53" y="964.30"/>
<path d="M1210.50 985.500v7" stroke="#5d6578" stroke-width="1.900"/>
<use href="#te" x="1202.20" y="963.50"/>
<path d="M1237.17 985.500v7" stroke="#5d6578" stroke-width="1.900"/>
<use href="#ty" x="1228.17" y="964.60"/>
<path d="M1263.83 985.500v7" stroke="#5d6578" stroke-width="1.900"/>
<use href="#tf" x="1254.63" y="963.60"/>
<path d="M1290.50 985.500v7" stroke="#5d6578" stroke-width="1.900"/>
<use href="#tc" x="1281.50" y="964.00"/>
<path d="M1317.17 985.500v7" stroke="#5d6578" stroke-width="1.900"/>
<use href="#ts" x="1307.87" y="964.30"/>
<path d="M1343.83 985.500v7" stroke="#5d6578" stroke-width="1.900"/>
<use href="#te" x="1335.53" y="963.50"/>
<path d="M1370.50 985.500v7" stroke="#5d6578" stroke-width="1.900"/>
<use href="#te" x="1362.20" y="963.50"/>
<path d="M1397.17 985.500v7" stroke="#5d6578" stroke-width="1.900"/>
<use href="#ts" x="1387.87" y="964.30"/>
<path d="M1423.83 985.500v7" stroke="#5d6578" stroke-width="1.900"/>
<use href="#te" x="1415.53" y="963.50"/>
<path d="M1450.50 985.500v7" stroke="#5d6578" stroke-width="1.900"/>
<use href="#ts" x="1441.20" y="964.30"/>
<path d="M1477.17 985.500v7" stroke="#5d6578" stroke-width="1.900"/>
<use href="#te" x="1468.87" y="963.50"/>
<path d="M1503.83 985.500v7" stroke="#5d6578" stroke-width="1.900"/>
<use href="#ts" x="1494.53" y="964.30"/>
<path d="M1530.50 985.500v7" stroke="#5d6578" stroke-width="1.900"/>
<use href="#te" x="1522.20" y="963.50"/>
<path d="M13 972.300h1.800v13.500h-1.800zM26.300 972.300v13.500l-10.500-6.750z" fill="#a2a7b4"/>
<path d="M50.300 972.800v12.600l-10.500-6.300z" fill="#a2a7b4"/><rect x="52" y="975.800" width="2" height="6.600" fill="#a2a7b4"/>
<path d="M68.800 970.300v16.800l13.500-8.400z" fill="#a2a7b4"/>
<path d="M99.300 972.800v12.600l10.500-6.300z" fill="#a2a7b4"/><rect x="95.600" y="975.800" width="2" height="6.600" fill="#a2a7b4"/>
<path d="M135.400 972.300h1.800v13.500h-1.800zM123.800 972.300v13.500l10.500-6.750z" fill="#a2a7b4"/>
<rect x="1502.500" y="948" width="90.500" height="7" rx="3.500" fill="#525a6b"/>
<path d="M1537.500 958h13v3.500l-4.700 4.500v27.500h-3.600v-27.500l-4.700-4.500z" fill="#d3d6dd"/>
<path d="M1587.01 977.69 L1587.01 980.31 L1584.49 980.61 L1583.67 982.60 L1585.24 984.58 L1583.38 986.44 L1581.40 984.87 L1579.41 985.69 L1579.11 988.21 L1576.49 988.21 L1576.19 985.69 L1574.20 984.87 L1572.22 986.44 L1570.36 984.58 L1571.93 982.60 L1571.11 980.61 L1568.59 980.31 L1568.59 977.69 L1571.11 977.39 L1571.93 975.40 L1570.36 973.42 L1572.22 971.56 L1574.20 973.13 L1576.19 972.31 L1576.49 969.79 L1579.11 969.79 L1579.41 972.31 L1581.40 973.13 L1583.38 971.56 L1585.24 973.42 L1583.67 975.40 L1584.49 977.39 z" fill="#9ca2b2"/><circle cx="1577.80" cy="979.00" r="3.30" fill="#3b4252"/>
<path d="M1577 920.500a8.500 8.500 0 1 0 0 17h8.500v-8.500a8.500 8.500 0 0 0-8.500-8.500z" fill="#0a0a0a"/>
<path d="M1571.500 930l9.500-5M1571.500 932.500l9.500-5M1574 934l7-3.700" stroke="#e8e8e8" stroke-width="1" fill="none"/>
<ellipse cx="680.200" cy="924" rx="8.300" ry="4" fill="none" stroke="#f0f0f0" stroke-width="1.500"/><path d="M680.200 914.500v19.500" stroke="#8fb7d6" stroke-width="1.600"/><path d="M683 918.800l3 1.800-3 1.700z" fill="#f0f0f0"/>
<path d="M696.0 922h6.200l-3.100 4.300z" fill="#9096a5"/>
<path d="M820.0 922h6.200l-3.100 4.300z" fill="#9096a5"/>
<path d="M855.0 922h6.200l-3.100 4.300z" fill="#9096a5"/>
<path d="M889.3 922h6.200l-3.100 4.300z" fill="#9096a5"/>
<path d="M923.5 922h6.200l-3.100 4.300z" fill="#9096a5"/>
<path d="M710.300 919.800l5.500-4.700v2.700l6-2.600v2.600l4.700 0v14.200h-16.200z" fill="#f2f2f2"/><rect x="713.300" y="922.800" width="10.300" height="6.200" fill="#7cc0f5" stroke="#3b4252" stroke-width="1"/>
<path d="M741.800 931.500l-3.800-5.200c.8-1 2-.8 2.800 0l1.600 1.600-1-8.600c.6-1 1.800-.8 2.100.1l1.300 5.800.2-8.700c.6-.9 1.900-.9 2.300 0l.5 8.500 1.700-7.700c.7-.8 1.800-.5 2.100.3l-1.200 8.400 2.700-5.400c.8-.6 1.700-.2 1.900.7l-3.200 8-1.200 3.800z" fill="#dcdcdc"/>
<circle cx="773.500" cy="924.200" r="5.700" fill="#5d6473" stroke="#f0f0f0" stroke-width="1.500"/><path d="M778 928.600l5 4.800" stroke="#f3d27a" stroke-width="1.700"/><path d="M780 917h6M783 914.200v5.600M780.500 922h5" stroke="#f0f0f0" stroke-width="1.300"/>
<rect x="795.500" y="914.500" width="18.600" height="17.800" fill="none" stroke="#f0f0f0" stroke-width="1.500" stroke-dasharray="2.200 1.600"/><circle cx="804" cy="922.500" r="7.300" fill="#5d6473" stroke="#f0f0f0" stroke-width="1.300"/><path d="M810 928.500l3.500 3.800" stroke="#d9b94a" stroke-width="1.600"/>
<rect x="833.600" y="917" width="17" height="12" rx="1" fill="#c9c9c9" stroke="#f0f0f0" stroke-width="1.400"/><path d="M840 930v1.600h4.200v-1.600M837 932.200h10.200" stroke="#f0f0f0" stroke-width="1.300" fill="none"/>
<rect x="868.700" y="914.800" width="14.300" height="14.600" fill="none" stroke="#e8e8e8" stroke-width="1.400"/><path d="M873.400 914.800v14.600M878.200 914.800v14.600M868.700 919.600h14.300M868.700 924.500h14.300" stroke="#e8e8e8" stroke-width="1.300"/>
<rect x="902.0" y="915.5" width="8.300" height="7.300" fill="#cfcfcf"/><rect x="904.6" y="918.1" width="3" height="2" fill="#b2b2b2"/>
<rect x="911.5" y="915.5" width="8.300" height="7.300" fill="#cfcfcf"/><rect x="914.1" y="918.1" width="3" height="2" fill="#b2b2b2"/>
<rect x="902.0" y="924.5" width="8.300" height="7.300" fill="#cfcfcf"/><rect x="904.6" y="927.1" width="3" height="2" fill="#b2b2b2"/>
<rect x="911.5" y="924.5" width="8.300" height="7.300" fill="#cfcfcf"/><rect x="914.1" y="927.1" width="3" height="2" fill="#b2b2b2"/>
</svg>
<!-- viewcube -->
<svg style="position:absolute;left:1440px;top:130px" width="160" height="140" viewBox="1440 130 160 140">
<defs><linearGradient id="vcl" x1="0" y1="0" x2="0" y2="1"><stop offset="0" stop-color="#efefef"/><stop offset="1" stop-color="#dedee0"/></linearGradient><filter id="vcb" x="-30%" y="-100%" width="160%" height="300%"><feGaussianBlur stdDeviation="3"/></filter></defs>
<ellipse cx="1528" cy="233" rx="42" ry="5.500" fill="#9a9a9a" opacity=".55" filter="url(#vcb)"/>
<path d="M1491.500 174.500l41 -0.300v60.500l-40.500-8z" fill="url(#vcl)"/>
<path d="M1532.500 174.200l33.500 -.2v52.500l-33.500 8.200z" fill="#e9e9ea"/>
<path d="M1491.500 174.500l41-.3 33.500-.2" stroke="#c9c9c9" stroke-width="1" stroke-dasharray="7 3" fill="none"/><path d="M1532.500 174.200v60.500" stroke="#cfcfcf" stroke-width="1" stroke-dasharray="9 3"/>
<text transform="translate(1500,208.500) skewY(7) scale(.56,1.05)" font-family="Liberation Sans, sans-serif" font-weight="bold" font-size="14.500" fill="#a9a9a9">BACK</text>
<text transform="translate(1543,209) skewY(-9) scale(.46,1.05)" font-family="Liberation Sans, sans-serif" font-weight="bold" font-size="14.500" fill="#a9a9a9">LEFT</text>
<path d="M1567.200 166v60" stroke="#7b78e6" stroke-width="1.500"/>
<path d="M1566.500 226.500l-39 12" stroke="#8be07c" stroke-width="1.500"/>
<path d="M1517.500 236.500l3 5 3.500-4.500M1520.500 241.500v6" stroke="#8be07c" stroke-width="1.400" fill="none"/>
<path d="M1563.300 152.300h8.200l-8.200 10.700h8.200" stroke="#6f6ce0" stroke-width="1.500" fill="none"/>
</svg>
</body></html>
